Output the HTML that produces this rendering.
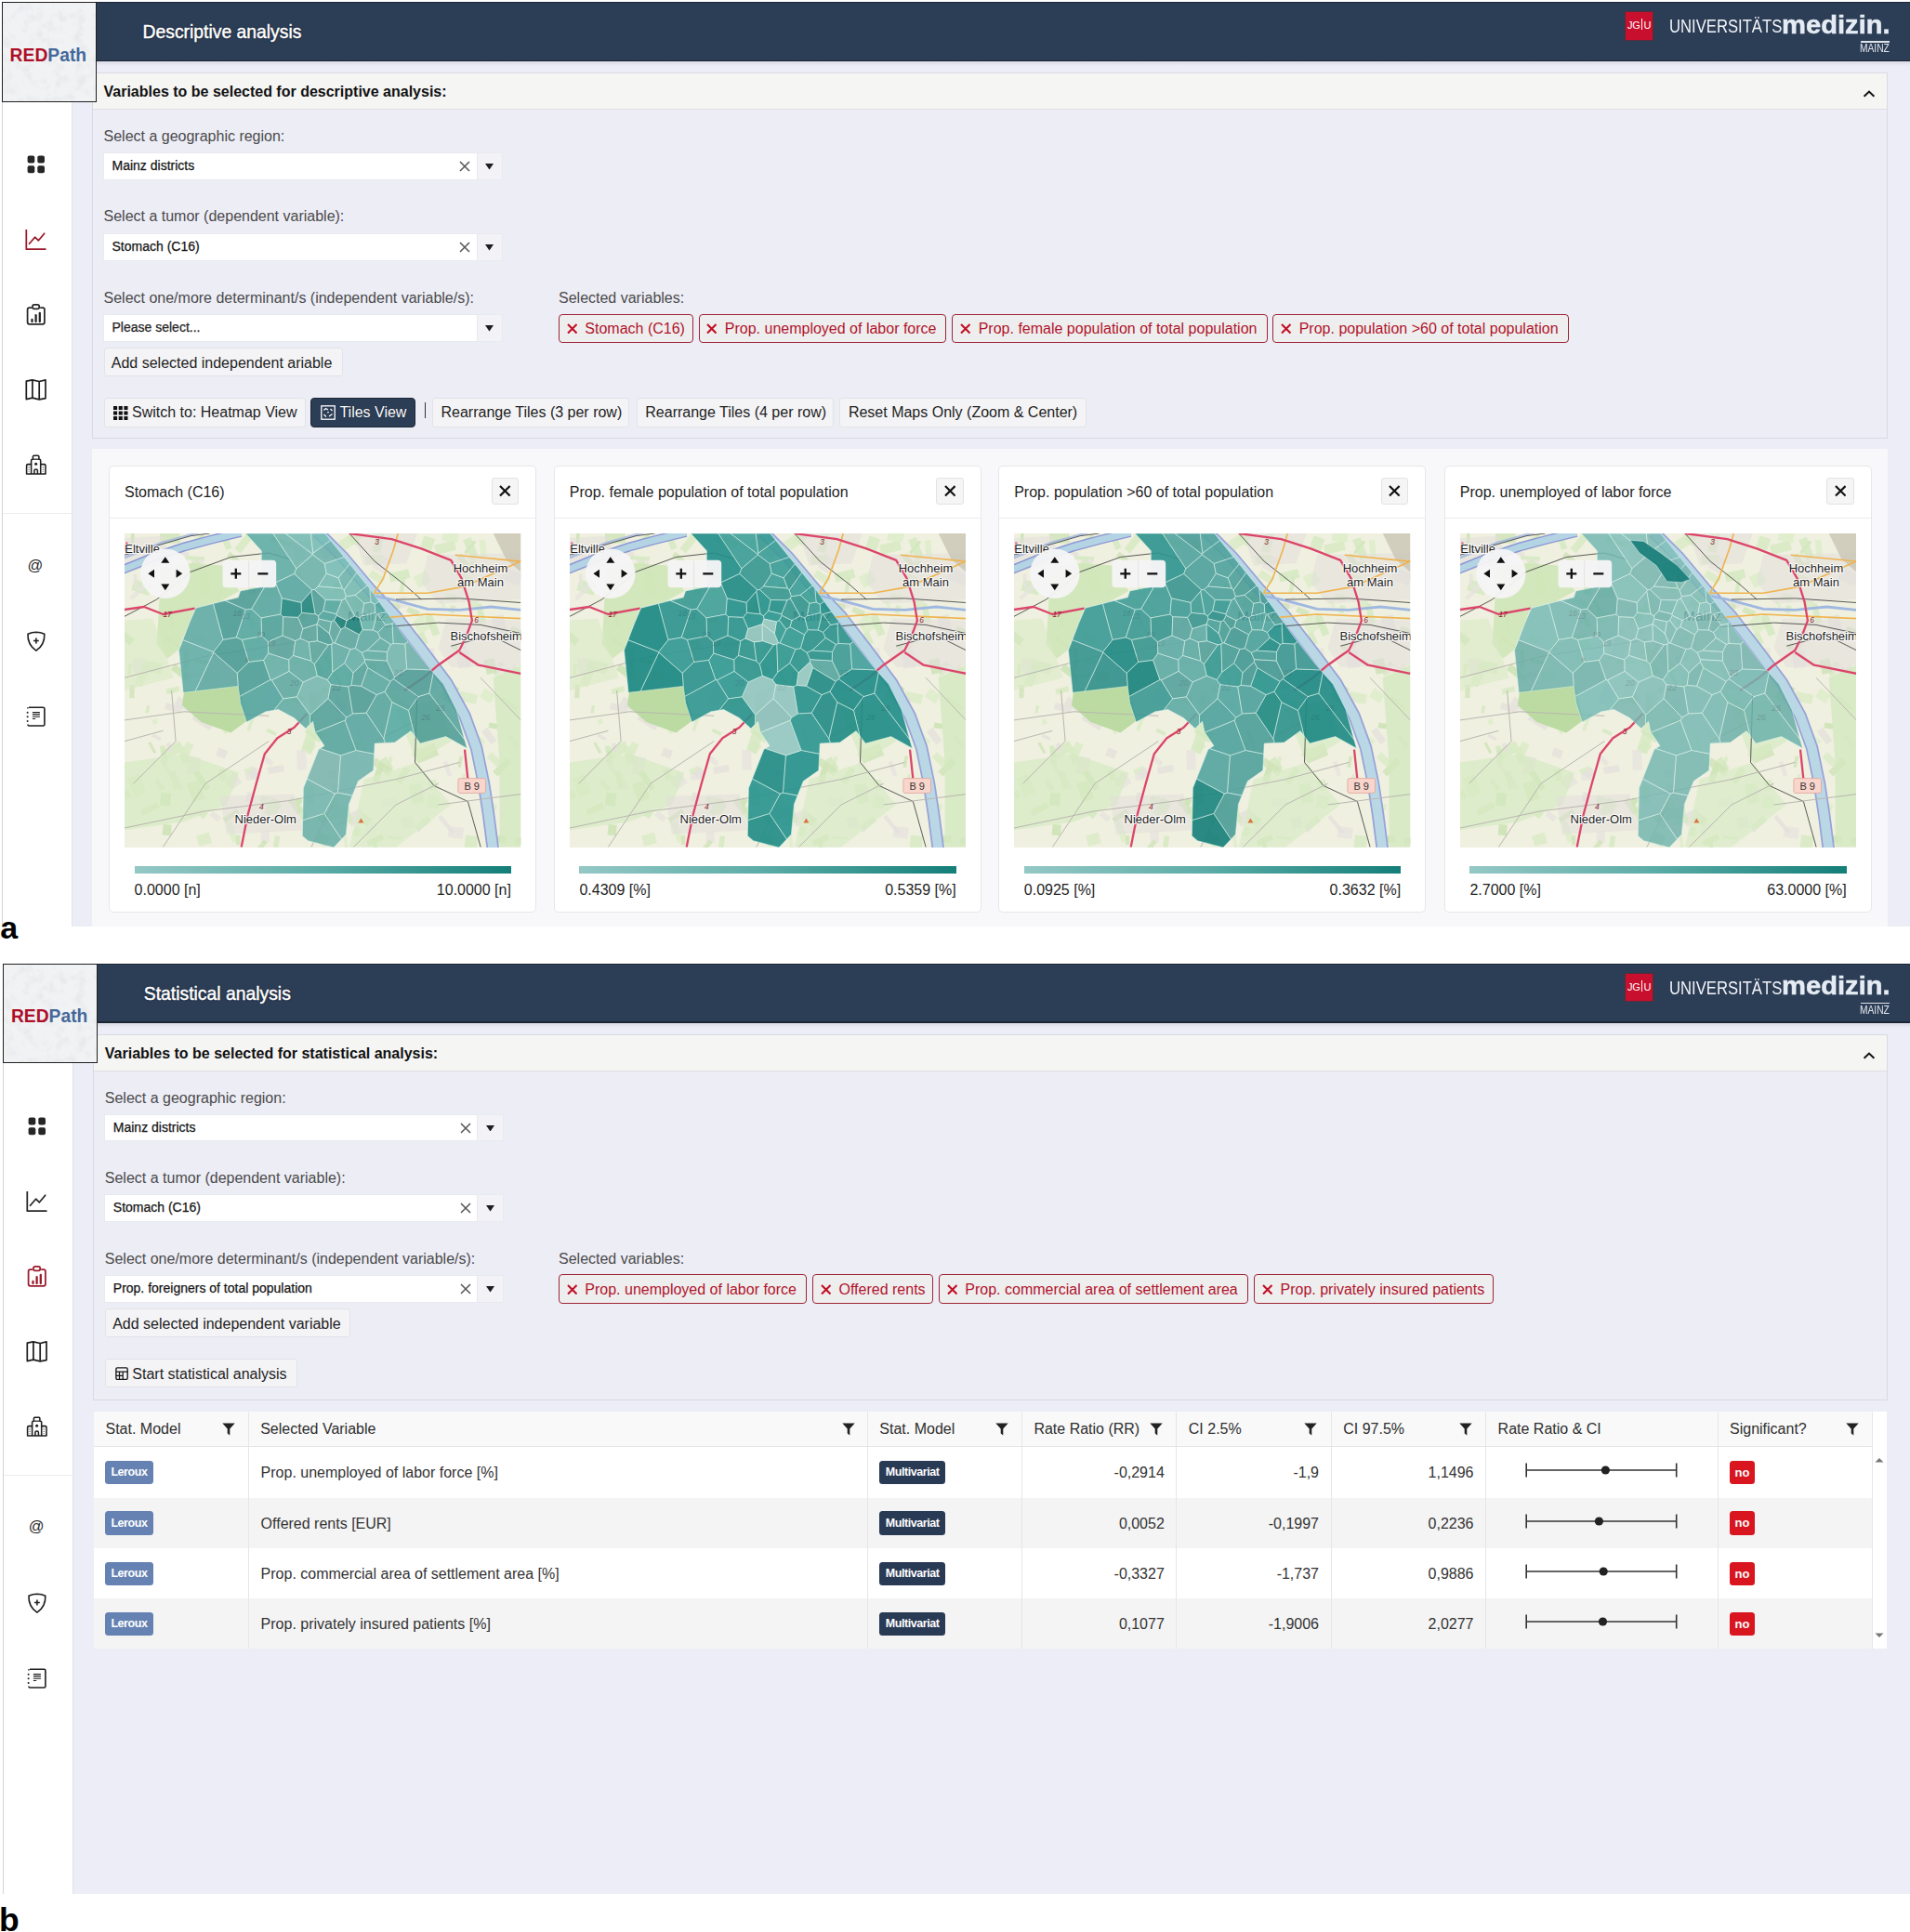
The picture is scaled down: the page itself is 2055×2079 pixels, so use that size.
<!DOCTYPE html><html><head><meta charset="utf-8"><style>html,body{margin:0;padding:0}body{width:2055px;height:2079px;position:relative;overflow:hidden;background:#fff;font-family:"Liberation Sans",sans-serif}</style></head><body><svg width="0" height="0" style="position:absolute"><symbol id="basemap" viewBox="0 0 426.5 338"><rect width="426.5" height="338" fill="#eff0df"/><rect x="95.4" y="179.1" width="12.0" height="9.6" fill="#d3e8bf" transform="rotate(113 101.4 183.9)" opacity="0.8"/><rect x="251.0" y="302.7" width="13.9" height="9.1" fill="#c9e2b2" transform="rotate(35 258.0 307.2)" opacity="0.8"/><rect x="224.2" y="179.5" width="12.5" height="12.5" fill="#e3e1dc" transform="rotate(42 230.5 185.8)" opacity="0.8"/><rect x="360.2" y="171.6" width="19.1" height="10.4" fill="#d9ebc6" transform="rotate(12 369.8 176.8)" opacity="0.8"/><rect x="117.6" y="6.4" width="21.4" height="8.2" fill="#d6eac2" transform="rotate(129 128.3 10.5)" opacity="0.8"/><rect x="298.0" y="305.4" width="12.5" height="11.8" fill="#e3e1dc" transform="rotate(80 304.2 311.3)" opacity="0.8"/><rect x="370.6" y="30.2" width="7.6" height="5.4" fill="#d6eac2" transform="rotate(174 374.4 32.9)" opacity="0.8"/><rect x="325.3" y="283.0" width="13.0" height="12.2" fill="#d6eac2" transform="rotate(103 331.8 289.1)" opacity="0.8"/><rect x="239.9" y="299.0" width="18.0" height="13.2" fill="#e3e1dc" transform="rotate(154 248.9 305.6)" opacity="0.8"/><rect x="290.0" y="105.7" width="15.3" height="9.3" fill="#e6e4df" transform="rotate(19 297.6 110.3)" opacity="0.8"/><rect x="264.6" y="331.8" width="10.1" height="4.4" fill="#c9e2b2" transform="rotate(87 269.6 334.0)" opacity="0.8"/><rect x="31.3" y="268.3" width="12.8" height="4.7" fill="#d6eac2" transform="rotate(53 37.7 270.6)" opacity="0.8"/><rect x="363.5" y="13.2" width="16.7" height="3.5" fill="#cfe4b8" transform="rotate(129 371.8 14.9)" opacity="0.8"/><rect x="229.5" y="308.8" width="10.3" height="5.6" fill="#d9ebc6" transform="rotate(6 234.7 311.6)" opacity="0.8"/><rect x="30.0" y="200.1" width="5.6" height="5.2" fill="#dcedc9" transform="rotate(73 32.8 202.7)" opacity="0.8"/><rect x="55.8" y="11.1" width="21.5" height="6.5" fill="#d6eac2" transform="rotate(173 66.5 14.3)" opacity="0.8"/><rect x="154.3" y="287.8" width="12.3" height="12.5" fill="#d3e8bf" transform="rotate(123 160.5 294.0)" opacity="0.8"/><rect x="256.9" y="314.1" width="14.6" height="7.7" fill="#e6e4df" transform="rotate(130 264.2 317.9)" opacity="0.8"/><rect x="394.0" y="144.7" width="9.9" height="6.3" fill="#d6eac2" transform="rotate(61 398.9 147.9)" opacity="0.8"/><rect x="414.6" y="101.7" width="12.2" height="9.5" fill="#cfe4b8" transform="rotate(24 420.7 106.4)" opacity="0.8"/><rect x="192.8" y="224.2" width="11.7" height="10.8" fill="#d9ebc6" transform="rotate(133 198.6 229.6)" opacity="0.8"/><rect x="248.4" y="319.2" width="5.4" height="7.1" fill="#dcedc9" transform="rotate(113 251.1 322.7)" opacity="0.8"/><rect x="246.5" y="104.9" width="11.9" height="6.4" fill="#dcedc9" transform="rotate(66 252.5 108.2)" opacity="0.8"/><rect x="118.1" y="125.8" width="19.7" height="3.3" fill="#e3e1dc" transform="rotate(102 128.0 127.5)" opacity="0.8"/><rect x="121.9" y="72.4" width="20.3" height="5.6" fill="#d6eac2" transform="rotate(34 132.1 75.2)" opacity="0.8"/><rect x="268.5" y="26.1" width="16.4" height="13.4" fill="#e6e4df" transform="rotate(121 276.7 32.8)" opacity="0.8"/><rect x="182.7" y="285.8" width="8.2" height="6.7" fill="#c9e2b2" transform="rotate(117 186.8 289.2)" opacity="0.8"/><rect x="112.5" y="259.2" width="5.6" height="13.5" fill="#e3e1dc" transform="rotate(57 115.3 266.0)" opacity="0.8"/><rect x="357.6" y="113.0" width="20.7" height="3.9" fill="#e3e1dc" transform="rotate(111 367.9 115.0)" opacity="0.8"/><rect x="168.9" y="171.2" width="21.1" height="8.1" fill="#dcedc9" transform="rotate(114 179.5 175.2)" opacity="0.8"/><rect x="167.6" y="136.1" width="22.5" height="4.7" fill="#d6eac2" transform="rotate(1 178.8 138.4)" opacity="0.8"/><rect x="228.8" y="331.5" width="18.6" height="3.4" fill="#dcedc9" transform="rotate(82 238.1 333.2)" opacity="0.8"/><rect x="221.0" y="294.5" width="21.4" height="12.4" fill="#d3e8bf" transform="rotate(175 231.7 300.7)" opacity="0.8"/><rect x="334.1" y="9.9" width="22.2" height="10.6" fill="#d6eac2" transform="rotate(166 345.1 15.2)" opacity="0.8"/><rect x="236.2" y="2.0" width="19.2" height="4.9" fill="#d9ebc6" transform="rotate(54 245.8 4.4)" opacity="0.8"/><rect x="212.2" y="135.0" width="22.8" height="9.7" fill="#dcedc9" transform="rotate(61 223.6 139.8)" opacity="0.8"/><rect x="403.9" y="181.0" width="20.4" height="3.7" fill="#d3e8bf" transform="rotate(40 414.1 182.9)" opacity="0.8"/><rect x="223.6" y="270.2" width="8.3" height="11.7" fill="#e3e1dc" transform="rotate(166 227.8 276.1)" opacity="0.8"/><rect x="342.3" y="-3.7" width="16.9" height="12.5" fill="#dcedc9" transform="rotate(9 350.8 2.5)" opacity="0.8"/><rect x="98.3" y="207.1" width="14.9" height="3.6" fill="#d9ebc6" transform="rotate(58 105.8 208.9)" opacity="0.8"/><rect x="362.2" y="260.3" width="5.9" height="3.5" fill="#d9ebc6" transform="rotate(87 365.1 262.0)" opacity="0.8"/><rect x="356.7" y="25.9" width="14.5" height="6.5" fill="#cfe4b8" transform="rotate(57 364.0 29.1)" opacity="0.8"/><rect x="159.0" y="128.7" width="10.8" height="5.9" fill="#d6eac2" transform="rotate(178 164.3 131.7)" opacity="0.8"/><rect x="43.4" y="184.2" width="18.6" height="7.2" fill="#e3e1dc" transform="rotate(14 52.7 187.8)" opacity="0.8"/><rect x="9.6" y="151.3" width="17.4" height="9.0" fill="#d9ebc6" transform="rotate(115 18.3 155.8)" opacity="0.8"/><rect x="259.3" y="141.6" width="12.1" height="8.5" fill="#d6eac2" transform="rotate(127 265.4 145.9)" opacity="0.8"/><rect x="402.2" y="138.7" width="5.3" height="5.4" fill="#d3e8bf" transform="rotate(49 404.8 141.4)" opacity="0.8"/><rect x="338.4" y="74.2" width="7.5" height="3.3" fill="#dcedc9" transform="rotate(59 342.1 75.9)" opacity="0.8"/><rect x="40.3" y="227.9" width="22.8" height="11.0" fill="#d6eac2" transform="rotate(153 51.7 233.4)" opacity="0.8"/><rect x="276.5" y="245.9" width="15.7" height="4.1" fill="#d9ebc6" transform="rotate(106 284.4 248.0)" opacity="0.8"/><rect x="195.5" y="75.4" width="12.4" height="8.8" fill="#d6eac2" transform="rotate(102 201.7 79.8)" opacity="0.8"/><rect x="65.8" y="5.8" width="21.0" height="4.3" fill="#c9e2b2" transform="rotate(152 76.3 7.9)" opacity="0.8"/><rect x="348.2" y="316.0" width="16.0" height="11.8" fill="#e6e4df" transform="rotate(7 356.2 321.9)" opacity="0.8"/><rect x="34.1" y="251.3" width="22.8" height="3.7" fill="#e3e1dc" transform="rotate(58 45.5 253.2)" opacity="0.8"/><rect x="348.5" y="79.0" width="8.4" height="5.7" fill="#d6eac2" transform="rotate(111 352.8 81.8)" opacity="0.8"/><rect x="96.3" y="198.1" width="22.8" height="9.1" fill="#d6eac2" transform="rotate(174 107.7 202.6)" opacity="0.8"/><rect x="206.7" y="323.3" width="12.8" height="11.2" fill="#c9e2b2" transform="rotate(29 213.1 328.9)" opacity="0.8"/><rect x="55.6" y="133.2" width="21.9" height="4.8" fill="#c9e2b2" transform="rotate(90 66.5 135.6)" opacity="0.8"/><rect x="383.8" y="169.4" width="13.4" height="10.9" fill="#dcedc9" transform="rotate(33 390.5 174.8)" opacity="0.8"/><rect x="313.0" y="42.9" width="14.8" height="13.3" fill="#dcedc9" transform="rotate(153 320.4 49.5)" opacity="0.8"/><rect x="277.9" y="284.4" width="16.3" height="9.4" fill="#e6e4df" transform="rotate(177 286.0 289.1)" opacity="0.8"/><rect x="120.7" y="88.0" width="20.3" height="5.2" fill="#e6e4df" transform="rotate(103 130.9 90.6)" opacity="0.8"/><rect x="133.3" y="254.7" width="7.7" height="13.9" fill="#e6e4df" transform="rotate(86 137.2 261.7)" opacity="0.8"/><rect x="189.1" y="277.5" width="20.6" height="9.1" fill="#d3e8bf" transform="rotate(87 199.4 282.1)" opacity="0.8"/><rect x="355.5" y="128.5" width="18.9" height="13.6" fill="#e6e4df" transform="rotate(84 364.9 135.3)" opacity="0.8"/><rect x="369.7" y="217.2" width="19.8" height="3.8" fill="#dcedc9" transform="rotate(39 379.6 219.1)" opacity="0.8"/><rect x="98.2" y="61.6" width="9.9" height="5.1" fill="#d9ebc6" transform="rotate(127 103.1 64.1)" opacity="0.8"/><rect x="372.6" y="83.0" width="21.4" height="6.4" fill="#d3e8bf" transform="rotate(76 383.3 86.2)" opacity="0.8"/><rect x="39.1" y="87.6" width="22.4" height="3.4" fill="#cfe4b8" transform="rotate(81 50.3 89.3)" opacity="0.8"/><rect x="-3.7" y="109.0" width="13.3" height="8.3" fill="#c9e2b2" transform="rotate(38 2.9 113.2)" opacity="0.8"/><rect x="162.9" y="181.0" width="7.3" height="6.0" fill="#d3e8bf" transform="rotate(120 166.5 184.0)" opacity="0.8"/><rect x="181.9" y="173.9" width="9.8" height="8.8" fill="#cfe4b8" transform="rotate(126 186.8 178.3)" opacity="0.8"/><rect x="313.7" y="94.8" width="17.8" height="10.2" fill="#dcedc9" transform="rotate(145 322.6 99.9)" opacity="0.8"/><rect x="39.9" y="314.6" width="11.4" height="9.2" fill="#c9e2b2" transform="rotate(95 45.7 319.2)" opacity="0.8"/><rect x="211.4" y="14.6" width="10.6" height="11.0" fill="#e3e1dc" transform="rotate(134 216.7 20.1)" opacity="0.8"/><rect x="67.6" y="298.6" width="17.5" height="4.4" fill="#e3e1dc" transform="rotate(168 76.3 300.8)" opacity="0.8"/><rect x="383.6" y="214.2" width="17.3" height="7.6" fill="#e3e1dc" transform="rotate(54 392.3 218.0)" opacity="0.8"/><rect x="190.8" y="103.7" width="8.4" height="3.8" fill="#d6eac2" transform="rotate(129 195.0 105.6)" opacity="0.8"/><rect x="146.9" y="83.6" width="12.3" height="12.6" fill="#dcedc9" transform="rotate(8 153.0 89.9)" opacity="0.8"/><rect x="99.4" y="256.6" width="11.7" height="6.7" fill="#d3e8bf" transform="rotate(73 105.3 259.9)" opacity="0.8"/><rect x="146.8" y="283.3" width="7.1" height="6.0" fill="#d3e8bf" transform="rotate(18 150.3 286.2)" opacity="0.8"/><rect x="236.9" y="302.2" width="7.1" height="10.7" fill="#d6eac2" transform="rotate(102 240.4 307.6)" opacity="0.8"/><rect x="339.4" y="250.8" width="16.2" height="4.6" fill="#e6e4df" transform="rotate(72 347.5 253.1)" opacity="0.8"/><rect x="227.9" y="51.3" width="8.4" height="12.6" fill="#dcedc9" transform="rotate(67 232.1 57.6)" opacity="0.8"/><rect x="1.9" y="264.7" width="21.9" height="13.4" fill="#dcedc9" transform="rotate(69 12.8 271.5)" opacity="0.8"/><rect x="260.9" y="327.1" width="18.0" height="6.3" fill="#c9e2b2" transform="rotate(155 269.9 330.2)" opacity="0.8"/><rect x="4.3" y="62.3" width="17.0" height="4.2" fill="#e6e4df" transform="rotate(136 12.9 64.4)" opacity="0.8"/><rect x="202.7" y="174.4" width="13.8" height="5.1" fill="#d9ebc6" transform="rotate(95 209.5 177.0)" opacity="0.8"/><rect x="334.7" y="310.9" width="23.0" height="4.2" fill="#e3e1dc" transform="rotate(51 346.2 313.0)" opacity="0.8"/><rect x="49.3" y="266.0" width="16.8" height="3.6" fill="#e6e4df" transform="rotate(65 57.8 267.8)" opacity="0.8"/><rect x="212.9" y="165.2" width="5.4" height="6.7" fill="#cfe4b8" transform="rotate(59 215.5 168.5)" opacity="0.8"/><rect x="285.3" y="40.6" width="21.3" height="9.6" fill="#d3e8bf" transform="rotate(167 295.9 45.4)" opacity="0.8"/><rect x="305.0" y="109.5" width="20.3" height="13.2" fill="#d6eac2" transform="rotate(155 315.1 116.1)" opacity="0.8"/><rect x="292.3" y="68.8" width="11.0" height="11.7" fill="#e6e4df" transform="rotate(74 297.8 74.7)" opacity="0.8"/><rect x="293.7" y="130.5" width="14.0" height="3.7" fill="#e6e4df" transform="rotate(153 300.7 132.3)" opacity="0.8"/><rect x="269.7" y="97.3" width="13.8" height="11.3" fill="#e3e1dc" transform="rotate(72 276.6 103.0)" opacity="0.8"/><rect x="189.1" y="6.4" width="9.9" height="12.3" fill="#cfe4b8" transform="rotate(81 194.0 12.6)" opacity="0.8"/><rect x="251.6" y="73.0" width="5.1" height="5.3" fill="#e3e1dc" transform="rotate(141 254.1 75.7)" opacity="0.8"/><rect x="360.4" y="178.8" width="8.0" height="3.2" fill="#e3e1dc" transform="rotate(105 364.4 180.4)" opacity="0.8"/><rect x="263.0" y="43.1" width="16.6" height="7.9" fill="#d9ebc6" transform="rotate(33 271.2 47.1)" opacity="0.8"/><rect x="168.9" y="102.0" width="5.6" height="10.9" fill="#d9ebc6" transform="rotate(43 171.7 107.4)" opacity="0.8"/><rect x="157.3" y="6.3" width="23.3" height="5.4" fill="#c9e2b2" transform="rotate(17 169.0 9.0)" opacity="0.8"/><rect x="77.6" y="106.0" width="7.2" height="13.0" fill="#dcedc9" transform="rotate(107 81.2 112.5)" opacity="0.8"/><rect x="110.3" y="259.7" width="13.8" height="13.3" fill="#e6e4df" transform="rotate(54 117.2 266.3)" opacity="0.8"/><rect x="233.3" y="3.2" width="11.4" height="13.9" fill="#d9ebc6" transform="rotate(57 239.0 10.2)" opacity="0.8"/><rect x="282.6" y="326.1" width="16.3" height="3.0" fill="#d3e8bf" transform="rotate(5 290.7 327.6)" opacity="0.8"/><rect x="1.0" y="167.5" width="14.2" height="5.1" fill="#cfe4b8" transform="rotate(92 8.1 170.0)" opacity="0.8"/><rect x="78.5" y="323.2" width="14.1" height="11.8" fill="#d9ebc6" transform="rotate(165 85.5 329.2)" opacity="0.8"/><rect x="154.4" y="250.4" width="17.0" height="7.3" fill="#e3e1dc" transform="rotate(171 162.9 254.0)" opacity="0.8"/><rect x="355.9" y="35.4" width="12.4" height="6.7" fill="#d6eac2" transform="rotate(122 362.1 38.8)" opacity="0.8"/><rect x="64.9" y="244.0" width="18.9" height="12.2" fill="#e3e1dc" transform="rotate(100 74.4 250.1)" opacity="0.8"/><rect x="149.9" y="134.4" width="9.4" height="11.6" fill="#dcedc9" transform="rotate(87 154.6 140.2)" opacity="0.8"/><rect x="340.1" y="164.9" width="19.3" height="13.1" fill="#c9e2b2" transform="rotate(125 349.7 171.4)" opacity="0.8"/><rect x="8.6" y="52.0" width="19.3" height="12.1" fill="#d3e8bf" transform="rotate(17 18.2 58.0)" opacity="0.8"/><rect x="126.2" y="201.2" width="20.2" height="3.6" fill="#d9ebc6" transform="rotate(110 136.4 203.0)" opacity="0.8"/><rect x="182.2" y="299.8" width="18.9" height="6.7" fill="#d3e8bf" transform="rotate(67 191.7 303.2)" opacity="0.8"/><rect x="71.8" y="262.6" width="22.4" height="6.7" fill="#c9e2b2" transform="rotate(56 83.0 266.0)" opacity="0.8"/><rect x="29.7" y="217.6" width="9.6" height="3.5" fill="#e3e1dc" transform="rotate(27 34.5 219.4)" opacity="0.8"/><rect x="244.8" y="-2.9" width="9.4" height="13.6" fill="#d6eac2" transform="rotate(40 249.4 3.9)" opacity="0.8"/><rect x="209.6" y="300.3" width="11.1" height="12.7" fill="#c9e2b2" transform="rotate(141 215.1 306.6)" opacity="0.8"/><rect x="65.3" y="24.6" width="20.7" height="4.2" fill="#d3e8bf" transform="rotate(4 75.7 26.7)" opacity="0.8"/><rect x="81.6" y="297.9" width="6.6" height="8.1" fill="#d3e8bf" transform="rotate(40 84.9 301.9)" opacity="0.8"/><rect x="262.6" y="254.0" width="21.6" height="6.8" fill="#c9e2b2" transform="rotate(109 273.4 257.4)" opacity="0.8"/><rect x="319.9" y="94.7" width="23.0" height="7.9" fill="#d3e8bf" transform="rotate(68 331.3 98.7)" opacity="0.8"/><rect x="220.3" y="155.0" width="18.8" height="3.8" fill="#c9e2b2" transform="rotate(62 229.7 156.9)" opacity="0.8"/><rect x="312.0" y="308.8" width="18.0" height="7.0" fill="#d3e8bf" transform="rotate(141 321.0 312.3)" opacity="0.8"/><rect x="252.3" y="65.4" width="11.7" height="14.0" fill="#d6eac2" transform="rotate(60 258.1 72.4)" opacity="0.8"/><rect x="181.4" y="79.2" width="11.1" height="11.2" fill="#e6e4df" transform="rotate(37 187.0 84.8)" opacity="0.8"/><rect x="364.3" y="326.8" width="16.6" height="13.2" fill="#d6eac2" transform="rotate(96 372.6 333.5)" opacity="0.8"/><rect x="148.2" y="60.9" width="16.9" height="7.5" fill="#d6eac2" transform="rotate(161 156.7 64.6)" opacity="0.8"/><rect x="197.1" y="191.8" width="5.7" height="13.5" fill="#d3e8bf" transform="rotate(3 200.0 198.6)" opacity="0.8"/><rect x="4.8" y="49.1" width="14.6" height="3.7" fill="#e6e4df" transform="rotate(85 12.0 50.9)" opacity="0.8"/><rect x="310.8" y="89.9" width="13.2" height="6.8" fill="#dcedc9" transform="rotate(134 317.4 93.3)" opacity="0.8"/><rect x="49.8" y="146.2" width="22.3" height="7.9" fill="#c9e2b2" transform="rotate(37 60.9 150.1)" opacity="0.8"/><rect x="313.1" y="229.9" width="23.6" height="13.8" fill="#cfe4b8" transform="rotate(158 324.9 236.7)" opacity="0.8"/><rect x="390.2" y="141.7" width="22.9" height="8.2" fill="#e6e4df" transform="rotate(180 401.6 145.8)" opacity="0.8"/><rect x="148.0" y="284.2" width="10.4" height="8.1" fill="#dcedc9" transform="rotate(160 153.2 288.2)" opacity="0.8"/><rect x="311.0" y="312.8" width="14.9" height="3.2" fill="#e3e1dc" transform="rotate(113 318.4 314.4)" opacity="0.8"/><rect x="225.3" y="53.4" width="6.0" height="5.2" fill="#c9e2b2" transform="rotate(139 228.3 56.0)" opacity="0.8"/><rect x="145.2" y="321.8" width="11.9" height="9.1" fill="#e6e4df" transform="rotate(88 151.2 326.4)" opacity="0.8"/><rect x="-0.1" y="144.4" width="11.4" height="3.6" fill="#d3e8bf" transform="rotate(98 5.6 146.1)" opacity="0.8"/><rect x="182.8" y="84.2" width="17.8" height="8.5" fill="#cfe4b8" transform="rotate(130 191.7 88.5)" opacity="0.8"/><rect x="10.3" y="140.0" width="16.9" height="10.4" fill="#e6e4df" transform="rotate(164 18.7 145.2)" opacity="0.8"/><rect x="395.7" y="247.6" width="21.0" height="7.5" fill="#cfe4b8" transform="rotate(135 406.2 251.4)" opacity="0.8"/><rect x="231.0" y="92.9" width="8.2" height="3.2" fill="#c9e2b2" transform="rotate(116 235.1 94.5)" opacity="0.8"/><rect x="187.8" y="219.0" width="22.6" height="12.0" fill="#d6eac2" transform="rotate(108 199.1 224.9)" opacity="0.8"/><rect x="152.8" y="211.8" width="10.6" height="3.8" fill="#d3e8bf" transform="rotate(25 158.1 213.7)" opacity="0.8"/><rect x="167.0" y="113.0" width="13.6" height="11.8" fill="#e3e1dc" transform="rotate(81 173.9 118.9)" opacity="0.8"/><rect x="243.0" y="43.0" width="5.7" height="8.3" fill="#c9e2b2" transform="rotate(41 245.9 47.2)" opacity="0.8"/><rect x="394.0" y="202.4" width="5.6" height="9.3" fill="#c9e2b2" transform="rotate(99 396.7 207.0)" opacity="0.8"/><rect x="43.7" y="262.5" width="19.3" height="5.9" fill="#d3e8bf" transform="rotate(78 53.3 265.5)" opacity="0.8"/><rect x="147.2" y="167.2" width="22.0" height="13.6" fill="#e6e4df" transform="rotate(116 158.2 174.0)" opacity="0.8"/><rect x="123.9" y="110.2" width="17.4" height="13.4" fill="#d9ebc6" transform="rotate(71 132.6 116.9)" opacity="0.8"/><rect x="103.9" y="317.8" width="22.9" height="6.5" fill="#dcedc9" transform="rotate(71 115.4 321.1)" opacity="0.8"/><rect x="8.7" y="134.6" width="12.9" height="12.9" fill="#e6e4df" transform="rotate(89 15.1 141.1)" opacity="0.8"/><rect x="310.6" y="231.0" width="7.2" height="10.0" fill="#d9ebc6" transform="rotate(22 314.2 236.0)" opacity="0.8"/><rect x="392.3" y="325.5" width="18.1" height="7.7" fill="#c9e2b2" transform="rotate(177 401.3 329.3)" opacity="0.8"/><rect x="111.2" y="181.8" width="5.9" height="5.6" fill="#e3e1dc" transform="rotate(172 114.1 184.6)" opacity="0.8"/><rect x="54.8" y="234.4" width="18.1" height="8.1" fill="#d9ebc6" transform="rotate(72 63.8 238.5)" opacity="0.8"/><rect x="50.9" y="16.0" width="19.4" height="4.9" fill="#e3e1dc" transform="rotate(34 60.6 18.4)" opacity="0.8"/><rect x="361.0" y="12.1" width="23.3" height="8.9" fill="#d3e8bf" transform="rotate(69 372.7 16.5)" opacity="0.8"/><rect x="181.8" y="59.4" width="5.5" height="4.1" fill="#dcedc9" transform="rotate(21 184.6 61.4)" opacity="0.8"/><rect x="42.9" y="117.2" width="22.4" height="3.8" fill="#cfe4b8" transform="rotate(35 54.1 119.1)" opacity="0.8"/><rect x="419.8" y="327.8" width="9.7" height="6.9" fill="#c9e2b2" transform="rotate(171 424.7 331.2)" opacity="0.8"/><rect x="37.2" y="280.7" width="14.0" height="11.1" fill="#c9e2b2" transform="rotate(96 44.2 286.2)" opacity="0.8"/><rect x="234.7" y="152.9" width="15.2" height="7.9" fill="#d6eac2" transform="rotate(96 242.3 156.9)" opacity="0.8"/><rect x="74.0" y="194.7" width="22.7" height="12.3" fill="#e3e1dc" transform="rotate(32 85.4 200.9)" opacity="0.8"/><rect x="131.3" y="279.1" width="7.5" height="9.6" fill="#e3e1dc" transform="rotate(10 135.0 283.9)" opacity="0.8"/><rect x="38.0" y="-1.2" width="21.5" height="11.7" fill="#cfe4b8" transform="rotate(178 48.8 4.7)" opacity="0.8"/><rect x="220.4" y="254.4" width="6.8" height="8.9" fill="#e3e1dc" transform="rotate(79 223.7 258.9)" opacity="0.8"/><rect x="244.7" y="69.3" width="13.7" height="9.2" fill="#cfe4b8" transform="rotate(115 251.5 73.9)" opacity="0.8"/><rect x="289.9" y="257.2" width="18.7" height="6.8" fill="#cfe4b8" transform="rotate(124 299.3 260.6)" opacity="0.8"/><rect x="117.1" y="328.0" width="10.1" height="4.4" fill="#cfe4b8" transform="rotate(90 122.2 330.1)" opacity="0.8"/><rect x="303.9" y="81.1" width="13.3" height="5.9" fill="#cfe4b8" transform="rotate(23 310.5 84.0)" opacity="0.8"/><rect x="214.5" y="291.3" width="23.7" height="8.8" fill="#d9ebc6" transform="rotate(79 226.4 295.7)" opacity="0.8"/><rect x="19.0" y="138.0" width="21.1" height="11.6" fill="#d6eac2" transform="rotate(11 29.5 143.8)" opacity="0.8"/><rect x="157.6" y="329.0" width="12.0" height="5.4" fill="#d3e8bf" transform="rotate(99 163.6 331.7)" opacity="0.8"/><rect x="174.4" y="289.7" width="18.5" height="7.0" fill="#cfe4b8" transform="rotate(54 183.6 293.2)" opacity="0.8"/><rect x="161.3" y="119.6" width="17.4" height="12.6" fill="#e3e1dc" transform="rotate(105 170.0 125.9)" opacity="0.8"/><rect x="134.6" y="-1.5" width="6.2" height="3.0" fill="#e6e4df" transform="rotate(159 137.8 0.0)" opacity="0.8"/><rect x="133.8" y="91.2" width="5.6" height="8.9" fill="#c9e2b2" transform="rotate(166 136.6 95.6)" opacity="0.8"/><rect x="303.7" y="273.5" width="20.9" height="13.0" fill="#d3e8bf" transform="rotate(79 314.1 280.0)" opacity="0.8"/><rect x="212.4" y="311.3" width="9.3" height="4.5" fill="#e6e4df" transform="rotate(55 217.0 313.6)" opacity="0.8"/><rect x="39.1" y="54.8" width="21.8" height="7.7" fill="#d6eac2" transform="rotate(143 50.0 58.7)" opacity="0.8"/><rect x="-1.1" y="278.4" width="8.5" height="6.0" fill="#d6eac2" transform="rotate(70 3.2 281.4)" opacity="0.8"/><rect x="244.3" y="317.9" width="10.7" height="6.2" fill="#d3e8bf" transform="rotate(115 249.7 321.0)" opacity="0.8"/><rect x="17.8" y="293.2" width="19.2" height="6.5" fill="#cfe4b8" transform="rotate(153 27.4 296.5)" opacity="0.8"/><rect x="193.5" y="136.6" width="22.0" height="12.1" fill="#d6eac2" transform="rotate(60 204.5 142.7)" opacity="0.8"/><rect x="370.0" y="71.3" width="11.1" height="10.1" fill="#d9ebc6" transform="rotate(172 375.5 76.4)" opacity="0.8"/><rect x="261.8" y="4.6" width="22.8" height="8.8" fill="#d3e8bf" transform="rotate(103 273.2 9.0)" opacity="0.8"/><rect x="66.3" y="270.9" width="20.7" height="13.1" fill="#cfe4b8" transform="rotate(71 76.7 277.4)" opacity="0.8"/><rect x="410.8" y="221.0" width="15.0" height="5.2" fill="#e3e1dc" transform="rotate(54 418.4 223.6)" opacity="0.8"/><rect x="240.5" y="119.9" width="14.8" height="6.5" fill="#e6e4df" transform="rotate(155 247.9 123.2)" opacity="0.8"/><rect x="179.8" y="238.8" width="21.3" height="9.9" fill="#e6e4df" transform="rotate(89 190.4 243.8)" opacity="0.8"/><rect x="71.4" y="28.4" width="13.7" height="13.2" fill="#e6e4df" transform="rotate(90 78.3 35.0)" opacity="0.8"/><rect x="128.8" y="252.3" width="11.2" height="5.7" fill="#d9ebc6" transform="rotate(158 134.4 255.1)" opacity="0.8"/><rect x="96.2" y="121.0" width="9.2" height="6.1" fill="#d9ebc6" transform="rotate(62 100.9 124.0)" opacity="0.8"/><rect x="292.1" y="112.3" width="7.1" height="5.4" fill="#e3e1dc" transform="rotate(80 295.7 115.0)" opacity="0.8"/><rect x="100.0" y="231.3" width="9.1" height="10.4" fill="#e3e1dc" transform="rotate(110 104.6 236.5)" opacity="0.8"/><rect x="283.2" y="175.5" width="16.4" height="7.7" fill="#dcedc9" transform="rotate(32 291.4 179.4)" opacity="0.8"/><rect x="178.5" y="12.7" width="19.9" height="12.5" fill="#e3e1dc" transform="rotate(88 188.4 18.9)" opacity="0.8"/><rect x="105.4" y="301.0" width="18.0" height="5.4" fill="#c9e2b2" transform="rotate(147 114.4 303.8)" opacity="0.8"/><rect x="140.3" y="334.0" width="14.2" height="5.0" fill="#cfe4b8" transform="rotate(129 147.4 336.5)" opacity="0.8"/><rect x="362.7" y="45.3" width="11.1" height="6.8" fill="#dcedc9" transform="rotate(26 368.2 48.8)" opacity="0.8"/><rect x="192.8" y="178.3" width="21.4" height="7.9" fill="#cfe4b8" transform="rotate(89 203.5 182.3)" opacity="0.8"/><rect x="347.6" y="63.0" width="6.8" height="11.4" fill="#dcedc9" transform="rotate(99 351.0 68.7)" opacity="0.8"/><rect x="243.6" y="225.9" width="10.5" height="6.6" fill="#dcedc9" transform="rotate(74 248.8 229.2)" opacity="0.8"/><rect x="385.7" y="137.3" width="15.6" height="11.4" fill="#cfe4b8" transform="rotate(76 393.5 143.0)" opacity="0.8"/><rect x="232.5" y="79.8" width="18.3" height="9.2" fill="#d3e8bf" transform="rotate(69 241.6 84.4)" opacity="0.8"/><rect x="126.8" y="50.6" width="22.4" height="8.3" fill="#c9e2b2" transform="rotate(97 138.0 54.8)" opacity="0.8"/><rect x="75.6" y="135.9" width="16.0" height="4.2" fill="#c9e2b2" transform="rotate(10 83.6 138.0)" opacity="0.8"/><rect x="290.2" y="53.9" width="17.6" height="4.3" fill="#d3e8bf" transform="rotate(99 299.0 56.0)" opacity="0.8"/><rect x="385.9" y="289.9" width="14.8" height="7.4" fill="#dcedc9" transform="rotate(12 393.3 293.6)" opacity="0.8"/><rect x="286.5" y="75.2" width="10.0" height="5.3" fill="#cfe4b8" transform="rotate(20 291.5 77.9)" opacity="0.8"/><rect x="173.3" y="86.1" width="23.3" height="5.0" fill="#e6e4df" transform="rotate(103 184.9 88.6)" opacity="0.8"/><rect x="279.2" y="80.1" width="9.9" height="6.8" fill="#d3e8bf" transform="rotate(62 284.1 83.5)" opacity="0.8"/><rect x="32.4" y="235.1" width="19.3" height="5.5" fill="#d3e8bf" transform="rotate(82 42.0 237.8)" opacity="0.8"/><rect x="135.1" y="252.5" width="8.1" height="10.3" fill="#e3e1dc" transform="rotate(49 139.2 257.7)" opacity="0.8"/><rect x="149.1" y="289.9" width="19.2" height="8.5" fill="#d6eac2" transform="rotate(124 158.6 294.2)" opacity="0.8"/><rect x="411.3" y="142.3" width="10.6" height="6.0" fill="#e3e1dc" transform="rotate(162 416.6 145.3)" opacity="0.8"/><rect x="11.3" y="54.8" width="17.2" height="5.3" fill="#e6e4df" transform="rotate(136 19.8 57.4)" opacity="0.8"/><rect x="355.1" y="244.1" width="12.1" height="3.5" fill="#cfe4b8" transform="rotate(100 361.2 245.9)" opacity="0.8"/><rect x="74.5" y="48.0" width="23.6" height="11.1" fill="#dcedc9" transform="rotate(87 86.3 53.6)" opacity="0.8"/><rect x="54.8" y="179.1" width="17.7" height="9.6" fill="#e3e1dc" transform="rotate(29 63.7 183.9)" opacity="0.8"/><rect x="28.0" y="25.0" width="17.9" height="4.0" fill="#d6eac2" transform="rotate(126 37.0 27.0)" opacity="0.8"/><rect x="292.8" y="182.9" width="17.6" height="7.9" fill="#d9ebc6" transform="rotate(32 301.6 186.9)" opacity="0.8"/><rect x="23.4" y="229.1" width="12.9" height="3.1" fill="#cfe4b8" transform="rotate(61 29.8 230.7)" opacity="0.8"/><rect x="352.5" y="119.6" width="5.8" height="5.3" fill="#c9e2b2" transform="rotate(2 355.4 122.3)" opacity="0.8"/><rect x="390.1" y="239.9" width="16.9" height="7.9" fill="#d9ebc6" transform="rotate(43 398.5 243.8)" opacity="0.8"/><rect x="140.6" y="75.7" width="12.9" height="4.1" fill="#d3e8bf" transform="rotate(57 147.1 77.7)" opacity="0.8"/><rect x="227.1" y="200.3" width="10.5" height="3.3" fill="#cfe4b8" transform="rotate(5 232.4 201.9)" opacity="0.8"/><rect x="87.8" y="148.5" width="14.7" height="10.0" fill="#d6eac2" transform="rotate(177 95.1 153.5)" opacity="0.8"/><rect x="274.7" y="244.8" width="14.9" height="7.7" fill="#d3e8bf" transform="rotate(56 282.2 248.6)" opacity="0.8"/><rect x="68.2" y="149.7" width="15.1" height="6.1" fill="#e3e1dc" transform="rotate(169 75.7 152.8)" opacity="0.8"/><rect x="174.9" y="40.2" width="24.0" height="4.8" fill="#dcedc9" transform="rotate(66 186.9 42.6)" opacity="0.8"/><rect x="45.0" y="166.0" width="14.1" height="5.7" fill="#d6eac2" transform="rotate(166 52.0 168.8)" opacity="0.8"/><rect x="0.3" y="6.0" width="16.8" height="3.6" fill="#c9e2b2" transform="rotate(91 8.7 7.8)" opacity="0.8"/><rect x="376.9" y="13.0" width="17.8" height="6.4" fill="#dcedc9" transform="rotate(85 385.8 16.2)" opacity="0.8"/><rect x="326.3" y="266.4" width="10.9" height="9.2" fill="#d9ebc6" transform="rotate(73 331.7 271.0)" opacity="0.8"/><rect x="43.7" y="227.8" width="9.5" height="4.7" fill="#e3e1dc" transform="rotate(70 48.4 230.1)" opacity="0.8"/><rect x="259.7" y="23.6" width="17.8" height="8.6" fill="#d9ebc6" transform="rotate(173 268.6 27.9)" opacity="0.8"/><rect x="204.0" y="120.5" width="14.5" height="3.9" fill="#cfe4b8" transform="rotate(120 211.3 122.5)" opacity="0.8"/><rect x="231.9" y="127.3" width="13.8" height="9.6" fill="#dcedc9" transform="rotate(5 238.8 132.1)" opacity="0.8"/><rect x="195.0" y="209.1" width="19.9" height="11.2" fill="#d3e8bf" transform="rotate(37 205.0 214.7)" opacity="0.8"/><rect x="265.5" y="247.2" width="23.2" height="8.2" fill="#cfe4b8" transform="rotate(36 277.1 251.4)" opacity="0.8"/><rect x="243.6" y="222.4" width="24.0" height="3.5" fill="#d6eac2" transform="rotate(72 255.6 224.2)" opacity="0.8"/><rect x="73.2" y="28.9" width="8.4" height="8.5" fill="#d6eac2" transform="rotate(46 77.4 33.1)" opacity="0.8"/><rect x="234.0" y="113.3" width="13.2" height="3.4" fill="#d6eac2" transform="rotate(132 240.6 115.0)" opacity="0.8"/><rect x="149.8" y="242.5" width="10.2" height="5.4" fill="#e6e4df" transform="rotate(41 154.9 245.2)" opacity="0.8"/><rect x="319.7" y="4.3" width="12.9" height="12.3" fill="#d6eac2" transform="rotate(109 326.2 10.5)" opacity="0.8"/><rect x="196.5" y="124.0" width="14.6" height="7.8" fill="#d6eac2" transform="rotate(36 203.7 127.9)" opacity="0.8"/><rect x="20.8" y="187.6" width="8.1" height="3.2" fill="#d3e8bf" transform="rotate(102 24.8 189.2)" opacity="0.8"/><rect x="407.4" y="40.2" width="19.8" height="12.9" fill="#e6e4df" transform="rotate(22 417.3 46.6)" opacity="0.8"/><rect x="392.8" y="92.6" width="21.3" height="13.0" fill="#e3e1dc" transform="rotate(78 403.4 99.0)" opacity="0.8"/><rect x="58.7" y="229.1" width="16.9" height="8.5" fill="#d9ebc6" transform="rotate(113 67.2 233.4)" opacity="0.8"/><rect x="96.7" y="2.9" width="23.0" height="6.5" fill="#d3e8bf" transform="rotate(69 108.2 6.2)" opacity="0.8"/><rect x="109.2" y="26.1" width="21.9" height="5.7" fill="#cfe4b8" transform="rotate(40 120.1 29.0)" opacity="0.8"/><rect x="92.0" y="301.4" width="11.3" height="6.3" fill="#e6e4df" transform="rotate(39 97.7 304.6)" opacity="0.8"/><rect x="231.3" y="131.5" width="14.6" height="6.3" fill="#e3e1dc" transform="rotate(151 238.6 134.6)" opacity="0.8"/><rect x="317.6" y="274.2" width="6.3" height="5.8" fill="#e3e1dc" transform="rotate(37 320.8 277.1)" opacity="0.8"/><path d="M39.2 36.9 L71.1 32.3 L105.2 34.6 L123.4 61.9 L102.9 73.3 L75.6 80.2 L68.8 98.4 L57.4 125.7 L46.0 134.8 L34.6 118.9 L36.9 82.4 Z" fill="#cfe6b8" opacity="0.9"/><path d="M64.2 169.0 L123.4 163.3 L132.5 200.9 L114.3 214.5 L82.4 203.1 L61.9 184.9 Z" fill="#bcdba2"/><path d="M0.0 246.4 L64.2 237.3 L123.4 257.8 L109.8 292.0 L64.2 310.2 L0.0 319.3 Z" fill="#d6eac2" opacity="0.7"/><path d="M396.7 155.3 L426.3 141.7 L426.3 337.5 L403.6 337.5 L403.6 246.4 Z" fill="#d3e8bf" opacity="0.8"/><path d="M257.8 264.6 L314.7 246.4 L351.2 292.0 L292.0 337.5 L241.9 337.5 Z" fill="#d9ebc6" opacity="0.7"/><path d="M0.0 93.8 L30.1 91.6 L52.8 155.3 L0.0 169.0 Z" fill="#d8e9c4" opacity="0.6"/><path d="M292.0 189.5 L337.5 178.1 L351.2 223.6 L314.7 246.4 Z" fill="#d5e9c2" opacity="0.7"/><path d="M326.1 23.2 L426.3 21.0 L426.3 71.1 L337.5 75.6 L319.3 52.8 Z" fill="#e1dfdb" opacity="0.55"/><path d="M346.6 91.6 L426.3 93.8 L426.3 141.7 L351.2 143.9 L337.5 123.4 Z" fill="#e1dfdb" opacity="0.55"/><path d="M102.9 282.9 L182.6 280.6 L191.8 319.3 L109.8 323.8 Z" fill="#e1dfdb" opacity="0.55"/><path d="M0.0 5.0 L41.4 2.7 L50.6 32.3 L0.0 41.4 Z" fill="#e1dfdb" opacity="0.55"/><path d="M276.0 123.4 L333.0 123.4 L337.5 169.0 L287.4 169.0 Z" fill="#e1dfdb" opacity="0.55"/><path d="M246.4 0.0 L314.7 0.0 L303.3 32.3 L257.8 34.6 Z" fill="#e1dfdb" opacity="0.55"/><path d="M396.7 0.0 L426.3 0.0 L426.3 41.4 L410.4 27.8 Z" fill="#c9c5b5" opacity="0.8"/><path d="M207.7 -1.8 L235.0 25.5 L264.6 60.8 L292.0 89.3 L319.3 124.6 L346.6 161.0 L366.0 196.3 L378.5 230.5 L386.5 269.2 L391.7 303.3 L396.7 342.1" fill="none" stroke="#97a2d8" stroke-width="13.5"/><path d="M207.7 -1.8 L235.0 25.5 L264.6 60.8 L292.0 89.3 L319.3 124.6 L346.6 161.0 L366.0 196.3 L378.5 230.5 L386.5 269.2 L391.7 303.3 L396.7 342.1" fill="none" stroke="#bad7e5" stroke-width="10"/><path d="M-2 39 L30 26 L64 14.5 L92 7 L125 -1" fill="none" stroke="#8c98d6" stroke-width="10"/><path d="M-2 39 L30 26 L64 14.5 L92 7 L125 -1" fill="none" stroke="#b4d4e4" stroke-width="7"/><path d="M-2 27 L40 10 L80 -1" fill="none" stroke="#9fb4de" stroke-width="2.5" opacity="0.8"/><path d="M265.8 66.5 L292.0 72.2 L326.1 81.3 L360.3 82.4 L394.4 79.0 L426.3 82.4" fill="none" stroke="#9fb8e0" stroke-width="2.8"/><path d="M0.0 23.2 L71.1 2.7 L91.6 0.0" fill="none" stroke="#4a4a4a" stroke-width="0.9"/><path d="M0.0 89.3 L34.6 71.1 L71.1 41.4 L114.3 25.5 L155.3 21.0 L178.1 27.8" fill="none" stroke="#4a4a4a" stroke-width="0.9"/><path d="M241.9 0.0 L269.2 30.1 L301.1 55.1 L319.3 71.1" fill="none" stroke="#4a4a4a" stroke-width="0.9"/><path d="M292.0 71.1 L360.3 69.9 L426.3 74.5" fill="none" stroke="#4a4a4a" stroke-width="0.9"/><path d="M278.3 100.7 L337.5 96.1 L383.1 98.4 L426.3 107.5" fill="none" stroke="#4a4a4a" stroke-width="0.9"/><path d="M314.7 173.5 L312.5 246.4 L333.0 271.5 L369.4 288.5 L383.1 337.5" fill="none" stroke="#4a4a4a" stroke-width="0.9"/><path d="M351.2 121.2 L394.4 109.8 L426.3 125.7" fill="none" stroke="#4a4a4a" stroke-width="0.9"/><path d="M0.0 200.9 L64.2 191.8 L155.3 196.3" fill="none" stroke="#b9b6b0" stroke-width="1"/><path d="M41.4 337.5 L87.0 269.2 L155.3 223.6" fill="none" stroke="#b9b6b0" stroke-width="1"/><path d="M246.4 337.5 L292.0 292.0 L337.5 269.2" fill="none" stroke="#b9b6b0" stroke-width="1"/><path d="M200.9 337.5 L223.6 292.0" fill="none" stroke="#b9b6b0" stroke-width="1"/><path d="M9.6 269.2 L55.1 223.6 L50.6 169.0" fill="none" stroke="#b9b6b0" stroke-width="1"/><path d="M0.0 317.0 L87.0 298.8 L178.1 287.4 L292.0 264.6 L360.3 246.4" fill="none" stroke="#b9b6b0" stroke-width="1"/><path d="M0.0 155.3 L87.0 132.5 L200.9 114.3" fill="none" stroke="#b9b6b0" stroke-width="1"/><path d="M269.2 223.6 L314.7 200.9" fill="none" stroke="#b9b6b0" stroke-width="1"/><path d="M337.5 292.0 L426.3 280.6" fill="none" stroke="#b9b6b0" stroke-width="1"/><path d="M0.0 223.6 L41.4 212.3" fill="none" stroke="#b9b6b0" stroke-width="1"/><path d="M383.1 155.3 L426.3 200.9" fill="none" stroke="#b9b6b0" stroke-width="1"/><path d="M265.8 68.8 L278.3 48.3 L289.7 16.4 L294.2 0.0" fill="none" stroke="#f0b34e" stroke-width="1.6"/><path d="M269.2 64.2 L326.1 64.2 L364.8 57.4 L426.3 30.1" fill="none" stroke="#f0b34e" stroke-width="1.6"/><path d="M355.7 23.2 L426.3 30.1" fill="none" stroke="#f0b34e" stroke-width="1.6"/><path d="M266.9 91.6 L326.1 87.0 L426.3 91.6" fill="none" stroke="#f0b34e" stroke-width="1.6"/><path d="M241.9 0.0 L287.4 6.1 L319.3 16.4 L351.2 28.9 L362.6 48.3 L370.5 73.3 L373.9 93.8 L367.1 112.0 L360.3 125.7 L337.5 141.7 L321.6 155.3 L301.1 169.0" fill="none" stroke="#dc456a" stroke-width="2.3" stroke-linejoin="round"/><path d="M360.3 128.0 L380.8 141.7 L426.3 150.8" fill="none" stroke="#dc456a" stroke-width="2.3" stroke-linejoin="round"/><path d="M0.0 82.0 L21.0 79.0 L41.4 87.0 L75.6 80.6" fill="none" stroke="#dc456a" stroke-width="2.3" stroke-linejoin="round"/><path d="M125.7 337.5 L132.5 303.3 L141.7 269.2 L150.8 237.3 L164.4 220.2 L182.6 208.8 L196.3 194.0" fill="none" stroke="#dc456a" stroke-width="2.3" stroke-linejoin="round"/><path d="M366.0 232.7 L369.4 264.6" fill="none" stroke="#dc456a" stroke-width="2.3" stroke-linejoin="round"/><path d="M0.0 18.7 L2.7 9.6" fill="none" stroke="#dc456a" stroke-width="2.3" stroke-linejoin="round"/><path d="M129.5438396720565 137.32122523343202 L132.5438396720565 132.32122523343202 L135.5438396720565 137.32122523343202 Z" fill="#d9743a"/><path d="M251.3839672056479 311.5412206786609 L254.3839672056479 306.5412206786609 L257.3839672056479 311.5412206786609 Z" fill="#d9743a"/><text x="0.3" y="21.3" font-size="13" text-anchor="start" fill="#1d1d1d" stroke="#fff" stroke-width="2.2" stroke-opacity="0.85" paint-order="stroke" font-family="Liberation Sans, sans-serif">Eltville</text><text x="383.0" y="42.3" font-size="13" text-anchor="middle" fill="#1d1d1d" stroke="#fff" stroke-width="2.2" stroke-opacity="0.85" paint-order="stroke" font-family="Liberation Sans, sans-serif">Hochheim</text><text x="383.0" y="57.3" font-size="13" text-anchor="middle" fill="#1d1d1d" stroke="#fff" stroke-width="2.2" stroke-opacity="0.85" paint-order="stroke" font-family="Liberation Sans, sans-serif">am Main</text><text x="350.5" y="115.3" font-size="13" text-anchor="start" fill="#1d1d1d" stroke="#fff" stroke-width="2.2" stroke-opacity="0.85" paint-order="stroke" font-family="Liberation Sans, sans-serif">Bischofsheim</text><text x="118.5" y="312.0" font-size="13" text-anchor="start" fill="#1d1d1d" stroke="#fff" stroke-width="2.2" stroke-opacity="0.85" paint-order="stroke" font-family="Liberation Sans, sans-serif">Nieder-Olm</text><text x="240.0" y="94.0" font-size="15.5" text-anchor="start" fill="#1d1d1d" stroke="#fff" stroke-width="2.2" stroke-opacity="0.85" paint-order="stroke" font-family="Liberation Sans, sans-serif">Mainz</text><rect x="358.9" y="263.6" width="29.6" height="15.8" rx="2" fill="#f9d5cc" stroke="#e0a49a" stroke-width="0.8"/><text x="373.7" y="275.6" font-size="11" text-anchor="middle" fill="#333" font-family="Liberation Sans, sans-serif">B 9</text><text x="41.4" y="89.7" font-size="8.5" font-style="italic" fill="#8a2030" font-family="Liberation Sans, sans-serif">17</text><text x="141.7" y="112.0" font-size="8.5" font-style="italic" fill="#8a2030" font-family="Liberation Sans, sans-serif">19</text><text x="153.0" y="121.2" font-size="8.5" font-style="italic" fill="#8a2030" font-family="Liberation Sans, sans-serif">19</text><text x="178.1" y="164.4" font-size="8.5" font-style="italic" fill="#8a2030" font-family="Liberation Sans, sans-serif">20</text><text x="223.6" y="169.0" font-size="8.5" font-style="italic" fill="#8a2030" font-family="Liberation Sans, sans-serif">22</text><text x="289.7" y="153.0" font-size="8.5" font-style="italic" fill="#8a2030" font-family="Liberation Sans, sans-serif">23</text><text x="319.3" y="200.9" font-size="8.5" font-style="italic" fill="#8a2030" font-family="Liberation Sans, sans-serif">26</text><text x="335.2" y="190.6" font-size="8.5" font-style="italic" fill="#8a2030" font-family="Liberation Sans, sans-serif">26</text><text x="174.7" y="215.7" font-size="8.5" font-style="italic" fill="#8a2030" font-family="Liberation Sans, sans-serif">3</text><text x="145.1" y="296.5" font-size="8.5" font-style="italic" fill="#8a2030" font-family="Liberation Sans, sans-serif">4</text><text x="269.2" y="11.8" font-size="8.5" font-style="italic" fill="#8a2030" font-family="Liberation Sans, sans-serif">3</text><text x="376.2" y="96.1" font-size="8.5" font-style="italic" fill="#8a2030" font-family="Liberation Sans, sans-serif">6</text><text x="116.6" y="89.3" font-size="8.5" font-style="italic" fill="#8a2030" font-family="Liberation Sans, sans-serif">18</text><text x="125.7" y="91.6" font-size="8.5" font-style="italic" fill="#8a2030" font-family="Liberation Sans, sans-serif">13</text></symbol></svg><div style="position:absolute;left:78.0px;top:64.0px;width:1977.0px;height:933.0px;background:#ecedf6;"></div><div style="position:absolute;left:1.5px;top:108.0px;width:76.7px;height:889.0px;background:#fff;border-left:1px solid #d4d4d8;border-right:1px solid #e2e2ea;box-sizing:border-box;"></div><svg style="position:absolute;left:0.0px;top:0.0px;overflow:visible" width="60" height="800" viewBox="0 0 60 800" fill="none" stroke="#222" stroke-width="1.7" stroke-linejoin="round"><rect x="29.6" y="167.4" width="7.7" height="8" rx="2" fill="#262626" stroke="none"/><rect x="40.3" y="167.4" width="7.7" height="8" rx="2" fill="#262626" stroke="none"/><rect x="29.6" y="178.3" width="7.7" height="8" rx="2" fill="#262626" stroke="none"/><rect x="40.3" y="178.3" width="7.7" height="8" rx="2" fill="#262626" stroke="none"/></svg><svg style="position:absolute;left:0.0px;top:0.0px;overflow:visible" width="60" height="800" viewBox="0 0 60 800" fill="none" stroke="#9c1a2c" stroke-width="1.75" stroke-linejoin="round"><path d="M28.3 247 V268.2 H49.5"/><path d="M31.5 262.3 L37.6 255.2 L41.4 258.8 L47.7 251.3" stroke-linecap="round"/></svg><svg style="position:absolute;left:0.0px;top:0.0px;overflow:visible" width="60" height="800" viewBox="0 0 60 800" fill="none" stroke="#262626" stroke-width="1.75" stroke-linejoin="round"><path d="M34 331 H31.6 Q29.6 331 29.6 333 V346.8 Q29.6 348.8 31.6 348.8 H45.9 Q47.9 348.8 47.9 346.8 V333 Q47.9 331 45.9 331 H43.2"/><rect x="35" y="327.9" width="7.2" height="4.5" rx="1.8"/><path d="M34.5 343.9 V346 M38.6 339.2 V346 M42.8 336.8 V346" stroke-width="2.3" stroke-linecap="round"/></svg><svg style="position:absolute;left:0.0px;top:0.0px;overflow:visible" width="60" height="800" viewBox="0 0 60 800" fill="none" stroke="#1e1e1e" stroke-width="1.7" stroke-linejoin="round"><path d="M28.3 410.2 L34.8 408.9 L42.2 410.5 L49 408.9 V428.6 L42.2 429.9 L34.8 428.2 L28.3 429.6 Z"/><path d="M34.9 409.2 V428.2 M42.2 410.5 V429.9"/></svg><svg style="position:absolute;left:0.0px;top:0.0px;overflow:visible" width="60" height="800" viewBox="0 0 60 800" fill="none" stroke="#1e1e1e" stroke-width="1.55" stroke-linejoin="round"><path d="M28.6 510 V501 Q28.6 499.6 30 499.6 H33.6 V495.6 Q33.6 494.2 35 494.2 H35.4 V491.6 Q35.4 490.3 36.7 490.3 H40.6 Q41.9 490.3 41.9 491.6 V494.2 H42.3 Q43.7 494.2 43.7 495.6 V499.6 H47.6 Q49 499.6 49 501 V510 Z"/><path d="M33.6 499.6 V510 M43.7 499.6 V510 M36.9 510 V506.6 Q36.9 505 38.65 505 Q40.4 505 40.4 506.6 V510"/><path d="M35.4 494.2 H41.9" stroke-width="1.2"/><circle cx="38.65" cy="499.3" r="1.55" fill="#1e1e1e" stroke="none"/><path d="M31.1 502.6 V503.4 M31.1 505 V505.8 M31.1 507.4 V508 M46.3 502.6 V503.4 M46.3 505 V505.8 M46.3 507.4 V508" stroke-width="1.1"/></svg><div style="position:absolute;left:2.5px;top:552.0px;width:75.7px;height:1.0px;background:#ececf0;"></div><div style="position:absolute;left:29.4px;top:598.5px;font-size:16.5px;line-height:19px;color:#1e1e1e">@</div><svg style="position:absolute;left:0.0px;top:0.0px;overflow:visible" width="60" height="800" viewBox="0 0 60 800" fill="none" stroke="#1e1e1e" stroke-width="1.6" stroke-linejoin="round"><path d="M38.9 680.3 Q43.6 680.4 47.8 682.2 Q48.4 693.6 38.9 700.2 Q29.4 693.6 30 682.2 Q34.2 680.4 38.9 680.3 Z"/><path d="M38.9 686.6 V692.4 M36 689.5 H41.8" stroke-width="1.6"/></svg><svg style="position:absolute;left:0.0px;top:0.0px;overflow:visible" width="60" height="800" viewBox="0 0 60 800" fill="none" stroke="#1e1e1e" stroke-width="1.6" stroke-linejoin="round"><path d="M31 761.3 H46.4 Q47.9 761.3 47.9 762.8 V779.5 Q47.9 781 46.4 781 H31.3 Q29.9 781 29.9 779.5"/><path d="M29.9 761.3 V762.6"/><circle cx="29.6" cy="766.8" r="1" fill="#1e1e1e" stroke="none"/><circle cx="29.6" cy="771.3" r="1" fill="#1e1e1e" stroke="none"/><circle cx="29.6" cy="775.9" r="1" fill="#1e1e1e" stroke="none"/><path d="M34.9 766.6 H42.9 M34.9 768.9 H42.9 M34.9 771.2 H42.9 M34.9 773.5 H38.2" stroke-width="1.1"/></svg><div style="position:absolute;left:104.0px;top:2.0px;width:1951.0px;height:64.0px;background:#2c3d56;border-top:1.5px solid #1b2636;box-sizing:border-box;"></div><div style="position:absolute;left:104.0px;top:64.8px;width:1951.0px;height:1.5px;background:#1d2534;"></div><div style="position:absolute;left:104.0px;top:66.3px;width:1951.0px;height:4.7px;background:linear-gradient(#d9dae4,rgba(236,237,246,0));"></div><div style="position:absolute;left:153.5px;top:23.0px;font-size:19.35px;line-height:22px;color:#fff;font-weight:normal;white-space:nowrap;text-shadow:0 0 2px #0c1522,0 0 1px #0c1522;letter-spacing:0px;-webkit-text-stroke:0.45px #fff;">Descriptive analysis</div><div style="position:absolute;left:1748.7px;top:13.0px;width:29.7px;height:29.7px;background:#c8102e;box-shadow:0 0 0 1px #5a2a3a;"><div style="position:absolute;left:0;top:7px;width:100%;text-align:center;color:#fff;font-size:11px;line-height:14px;letter-spacing:-0.3px">JG<span style="display:inline-block;width:1px;height:12px;background:#fff;vertical-align:-1px;margin:0 1.5px"></span>U</div></div><div style="position:absolute;left:1795.6px;top:16.3px;font-size:20.5px;line-height:23px;color:#f2f4f8;white-space:nowrap;transform-origin:0 0;transform:scaleX(0.8125)">UNIVERSITÄTS</div><div style="position:absolute;left:1917px;top:11.8px;font-size:27px;line-height:31px;font-weight:bold;color:#e6ecf3;white-space:nowrap;transform-origin:0 0;transform:scaleX(1.08);-webkit-text-stroke:0.5px #e6ecf3">medizin.</div><div style="position:absolute;left:2001.5px;top:44.3px;width:31.8px;height:1.3px;background:#dfe3ea;"></div><div style="position:absolute;left:2001px;top:44.3px;font-size:12.8px;line-height:15px;color:#e4e8ee;white-space:nowrap;transform-origin:0 0;transform:scaleX(0.80)">MAINZ</div><div style="position:absolute;left:99.0px;top:78.0px;width:1932.0px;height:394.0px;background:#ededf6;border:1px solid #d9d9e2;box-sizing:border-box;"></div><div style="position:absolute;left:100.0px;top:79.0px;width:1930.0px;height:39.0px;background:#f5f5f4;border-bottom:1px solid #dedee2;box-sizing:border-box;"></div><div style="position:absolute;left:111.5px;top:90.1px;font-size:16px;line-height:17px;color:#111;font-weight:bold;white-space:nowrap;">Variables to be selected for descriptive analysis:</div><svg style="position:absolute;left:2003.5px;top:96.3px" width="14" height="10" viewBox="0 0 14 10"><path d="M1.6 7.8 L7 2.6 L12.4 7.8" fill="none" stroke="#111" stroke-width="2"/></svg><div style="position:absolute;left:2.0px;top:2.0px;width:102.0px;height:107.8px;box-sizing:border-box;border:1.6px solid #202020;background:#f1f2f4;overflow:hidden;"><svg width="100%" height="100%" style="position:absolute;left:0;top:0"><defs><filter id="nz2" x="0" y="0" width="100%" height="100%"><feTurbulence type="fractalNoise" baseFrequency="0.09" numOctaves="3" seed="4"/><feColorMatrix values="0 0 0 0 0.55  0 0 0 0 0.56  0 0 0 0 0.58  0 0 0 1.6 -0.75"/></filter></defs><rect width="100%" height="100%" filter="url(#nz2)" opacity="0.35"/></svg></div><div style="position:absolute;left:10.6px;top:48.6px;font-size:19.3px;line-height:21px;color:#333;font-weight:bold;white-space:nowrap;letter-spacing:0px;"><span style="color:#ad0f26">RED</span><span style="color:#44689a">Path</span></div><div style="position:absolute;left:111.5px;top:137.8px;font-size:16px;line-height:17px;color:#4b4b4b;font-weight:normal;white-space:nowrap;">Select a geographic region:</div><div style="position:absolute;left:111.7px;top:165.0px;width:428.3px;height:28.0px;background:#fff;box-shadow:0 0 0 0.6px #e6e6ec;"></div><div style="position:absolute;left:513.0px;top:165.0px;width:27.0px;height:28.0px;background:#f3f3f7;"></div><div style="position:absolute;left:512.5px;top:165.0px;width:1.0px;height:28.0px;background:#e8e8ee;"></div><div style="position:absolute;left:120.5px;top:170.2px;font-size:14px;line-height:16px;color:#141414;font-weight:normal;white-space:nowrap;-webkit-text-stroke:0.25px #141414;">Mainz districts</div><svg style="position:absolute;left:493.8px;top:173.3px" width="12" height="12" viewBox="-6.0 -6.0 12 12"><path d="M-5.0 -5.0 L5.0 5.0 M5.0 -5.0 L-5.0 5.0" stroke="#555" stroke-width="1.5" stroke-linecap="butt"/></svg><svg style="position:absolute;left:522.2px;top:176.2px" width="9" height="6.5" viewBox="0 0 9 6.5"><path d="M0 0 H9 L4.5 6.5 Z" fill="#1e1e1e"/></svg><div style="position:absolute;left:111.5px;top:224.0px;font-size:16px;line-height:17px;color:#4b4b4b;font-weight:normal;white-space:nowrap;">Select a tumor (dependent variable):</div><div style="position:absolute;left:111.7px;top:251.5px;width:428.3px;height:28.5px;background:#fff;box-shadow:0 0 0 0.6px #e6e6ec;"></div><div style="position:absolute;left:513.0px;top:251.5px;width:27.0px;height:28.5px;background:#f3f3f7;"></div><div style="position:absolute;left:512.5px;top:251.5px;width:1.0px;height:28.5px;background:#e8e8ee;"></div><div style="position:absolute;left:120.5px;top:256.9px;font-size:14px;line-height:16px;color:#141414;font-weight:normal;white-space:nowrap;-webkit-text-stroke:0.25px #141414;">Stomach (C16)</div><svg style="position:absolute;left:493.8px;top:260.1px" width="12" height="12" viewBox="-6.0 -6.0 12 12"><path d="M-5.0 -5.0 L5.0 5.0 M5.0 -5.0 L-5.0 5.0" stroke="#555" stroke-width="1.5" stroke-linecap="butt"/></svg><svg style="position:absolute;left:522.2px;top:263.0px" width="9" height="6.5" viewBox="0 0 9 6.5"><path d="M0 0 H9 L4.5 6.5 Z" fill="#1e1e1e"/></svg><div style="position:absolute;left:111.5px;top:312.0px;font-size:16px;line-height:17px;color:#4b4b4b;font-weight:normal;white-space:nowrap;">Select one/more determinant/s (independent variable/s):</div><div style="position:absolute;left:111.7px;top:339.4px;width:428.3px;height:27.2px;background:#fff;box-shadow:0 0 0 0.6px #e6e6ec;"></div><div style="position:absolute;left:513.0px;top:339.4px;width:27.0px;height:27.2px;background:#f3f3f7;"></div><div style="position:absolute;left:512.5px;top:339.4px;width:1.0px;height:27.2px;background:#e8e8ee;"></div><div style="position:absolute;left:120.5px;top:344.2px;font-size:14px;line-height:16px;color:#2a2a2a;font-weight:normal;white-space:nowrap;-webkit-text-stroke:0.25px #141414;">Please select...</div><svg style="position:absolute;left:522.2px;top:350.2px" width="9" height="6.5" viewBox="0 0 9 6.5"><path d="M0 0 H9 L4.5 6.5 Z" fill="#1e1e1e"/></svg><div style="position:absolute;left:111.6px;top:373.7px;width:257.4px;height:30.9px;background:#f4f4f6;border:1px solid #e2e2e8;border-radius:3px;box-sizing:border-box;"></div><div style="position:absolute;left:119.8px;top:381.6px;font-size:16px;line-height:17px;color:#1e1e1e;font-weight:normal;white-space:nowrap;">Add selected independent ariable</div><div style="position:absolute;left:601.0px;top:312.0px;font-size:16px;line-height:17px;color:#4b4b4b;font-weight:normal;white-space:nowrap;">Selected variables:</div><div style="position:absolute;left:601.0px;top:337.7px;width:144.5px;height:31.8px;background:#efeeef;border:1.6px solid #9e2436;border-radius:4px;box-sizing:border-box;"></div><svg style="position:absolute;left:609.8px;top:348.2px" width="11.5" height="11.5" viewBox="-5.75 -5.75 11.5 11.5"><path d="M-4.75 -4.75 L4.75 4.75 M4.75 -4.75 L-4.75 4.75" stroke="#c10f24" stroke-width="2.1" stroke-linecap="butt"/></svg><div style="position:absolute;left:629.3px;top:345.2px;font-size:16px;line-height:17px;color:#b0142b;font-weight:normal;white-space:nowrap;">Stomach (C16)</div><div style="position:absolute;left:751.5px;top:337.7px;width:266.8px;height:31.8px;background:#efeeef;border:1.6px solid #9e2436;border-radius:4px;box-sizing:border-box;"></div><svg style="position:absolute;left:760.2px;top:348.2px" width="11.5" height="11.5" viewBox="-5.75 -5.75 11.5 11.5"><path d="M-4.75 -4.75 L4.75 4.75 M4.75 -4.75 L-4.75 4.75" stroke="#c10f24" stroke-width="2.1" stroke-linecap="butt"/></svg><div style="position:absolute;left:779.8px;top:345.2px;font-size:16px;line-height:17px;color:#b0142b;font-weight:normal;white-space:nowrap;">Prop. unemployed of labor force</div><div style="position:absolute;left:1024.4px;top:337.7px;width:339.3px;height:31.8px;background:#efeeef;border:1.6px solid #9e2436;border-radius:4px;box-sizing:border-box;"></div><svg style="position:absolute;left:1033.2px;top:348.2px" width="11.5" height="11.5" viewBox="-5.75 -5.75 11.5 11.5"><path d="M-4.75 -4.75 L4.75 4.75 M4.75 -4.75 L-4.75 4.75" stroke="#c10f24" stroke-width="2.1" stroke-linecap="butt"/></svg><div style="position:absolute;left:1052.7px;top:345.2px;font-size:16px;line-height:17px;color:#b0142b;font-weight:normal;white-space:nowrap;">Prop. female population of total population</div><div style="position:absolute;left:1369.4px;top:337.7px;width:318.5px;height:31.8px;background:#efeeef;border:1.6px solid #9e2436;border-radius:4px;box-sizing:border-box;"></div><svg style="position:absolute;left:1378.2px;top:348.2px" width="11.5" height="11.5" viewBox="-5.75 -5.75 11.5 11.5"><path d="M-4.75 -4.75 L4.75 4.75 M4.75 -4.75 L-4.75 4.75" stroke="#c10f24" stroke-width="2.1" stroke-linecap="butt"/></svg><div style="position:absolute;left:1397.7px;top:345.2px;font-size:16px;line-height:17px;color:#b0142b;font-weight:normal;white-space:nowrap;">Prop. population &gt;60 of total population</div><div style="position:absolute;left:111.5px;top:427.5px;width:217.1px;height:32.1px;background:#f4f4f6;border:1px solid #e2e2e8;border-radius:3px;box-sizing:border-box;"></div><svg style="position:absolute;left:121.7px;top:436.6px" width="16" height="15.5" viewBox="0 0 16 15.5"><rect x="0.0" y="0.0" width="4.1" height="4.0" fill="#111"/><rect x="0.0" y="5.5" width="4.1" height="4.0" fill="#111"/><rect x="0.0" y="11.0" width="4.1" height="4.0" fill="#111"/><rect x="5.7" y="0.0" width="4.1" height="4.0" fill="#111"/><rect x="5.7" y="5.5" width="4.1" height="4.0" fill="#111"/><rect x="5.7" y="11.0" width="4.1" height="4.0" fill="#111"/><rect x="11.4" y="0.0" width="4.1" height="4.0" fill="#111"/><rect x="11.4" y="5.5" width="4.1" height="4.0" fill="#111"/><rect x="11.4" y="11.0" width="4.1" height="4.0" fill="#111"/></svg><div style="position:absolute;left:142.0px;top:435.3px;font-size:16px;line-height:17px;color:#1e1e1e;font-weight:normal;white-space:nowrap;">Switch to: Heatmap View</div><div style="position:absolute;left:334.3px;top:427.5px;width:112.7px;height:32.9px;background:#2c3d56;border:1px solid #1c2738;border-radius:4px;box-sizing:border-box;"></div><svg style="position:absolute;left:344.6px;top:436.4px" width="16" height="16" viewBox="0 0 16 16" fill="none" stroke="#fff" stroke-width="1.3"><rect x="0.8" y="0.8" width="14.4" height="14.4"/><path d="M3.5 5.5 L5.5 3.5 L8 5 M12.5 6 L10.5 4 M3.5 10 L6 12.5 M9 12 L12.5 9.5 M7 8 L9 7.5" stroke-width="1.2"/></svg><div style="position:absolute;left:365.4px;top:435.3px;font-size:16px;line-height:17px;color:#fff;font-weight:normal;white-space:nowrap;text-shadow:0 0 1px #0a1220;">Tiles View</div><div style="position:absolute;left:456.8px;top:433.0px;width:1.5px;height:17.0px;background:#333;"></div><div style="position:absolute;left:465.0px;top:427.5px;width:212.2px;height:32.1px;background:#f4f4f6;border:1px solid #e2e2e8;border-radius:3px;box-sizing:border-box;"></div><div style="position:absolute;left:474.5px;top:435.3px;font-size:16px;line-height:17px;color:#1e1e1e;font-weight:normal;white-space:nowrap;">Rearrange Tiles (3 per row)</div><div style="position:absolute;left:684.8px;top:427.5px;width:212.4px;height:32.1px;background:#f4f4f6;border:1px solid #e2e2e8;border-radius:3px;box-sizing:border-box;"></div><div style="position:absolute;left:694.3px;top:435.3px;font-size:16px;line-height:17px;color:#1e1e1e;font-weight:normal;white-space:nowrap;">Rearrange Tiles (4 per row)</div><div style="position:absolute;left:903.4px;top:427.5px;width:265.5px;height:32.1px;background:#f4f4f6;border:1px solid #e2e2e8;border-radius:3px;box-sizing:border-box;"></div><div style="position:absolute;left:912.9px;top:435.3px;font-size:16px;line-height:17px;color:#1e1e1e;font-weight:normal;white-space:nowrap;">Reset Maps Only (Zoom &amp; Center)</div><div style="position:absolute;left:99.4px;top:483.3px;width:1931.6px;height:513.7px;background:#f8f8fa;"></div><div style="position:absolute;left:117.0px;top:501.3px;width:460.0px;height:481.0px;background:#fff;border:1px solid #e7e7ea;border-radius:5px;box-sizing:border-box;"></div><div style="position:absolute;left:118.0px;top:556.5px;width:458.0px;height:1.0px;background:#ebebee;"></div><div style="position:absolute;left:134.0px;top:521.4px;font-size:16px;line-height:17px;color:#1e1e1e;font-weight:normal;white-space:nowrap;">Stomach (C16)</div><div style="position:absolute;left:528.5px;top:513.8px;width:29.5px;height:29.5px;background:#f5f5f5;border:1px solid #e3e3e3;border-radius:3px;box-sizing:border-box;"></div><svg style="position:absolute;left:537.0px;top:522.2px" width="12.6" height="12.6" viewBox="-6.3 -6.3 12.6 12.6"><path d="M-5.3 -5.3 L5.3 5.3 M5.3 -5.3 L-5.3 5.3" stroke="#111" stroke-width="2.2" stroke-linecap="butt"/></svg><svg style="position:absolute;left:134.0px;top:574.1px" width="426.5" height="338" viewBox="0 0 426.5 338"><use href="#basemap" x="0" y="0" width="426.5" height="338"/><g opacity="0.86" stroke="#dff4f0" stroke-width="0.8" stroke-opacity="0.7"><path d="M95.7 127.6 L106.0 114.5 L95.5 75.5 L76.7 80.2 L69.9 96.1 L62.7 114.7 Z" fill="#5ba8a3"/><path d="M202.9 21.2 L202.3 22.4 L202.3 22.9 L215.2 32.6 L236.3 25.5 L221.6 7.4 Z" fill="#69b0aa"/><path d="M261.6 144.4 L254.5 164.4 L271.1 173.7 L280.0 170.3 L286.2 159.3 Z" fill="#55a5a0"/><path d="M162.3 53.0 L154.1 51.3 L136.6 81.3 L146.9 91.0 L168.0 87.1 L169.4 69.9 Z" fill="#53a4a0"/><path d="M170.1 109.9 L170.7 89.8 L168.0 87.1 L146.9 91.0 L147.7 110.6 L154.4 116.7 Z" fill="#499e99"/><path d="M258.4 135.6 L255.3 128.3 L248.5 123.6 L242.9 124.6 L236.6 139.6 L246.1 150.0 L258.5 138.3 Z" fill="#60ada7"/><path d="M256.2 103.7 L253.0 91.0 L247.8 88.8 L239.0 93.6 L236.9 100.7 L252.6 109.0 Z" fill="#147b76"/><path d="M157.0 157.5 L149.6 136.3 L133.8 138.3 L121.2 150.2 L122.2 164.4 L122.3 164.4 L123.7 175.6 Z" fill="#469b96"/><path d="M230.0 47.8 L234.4 59.2 L236.1 61.2 L249.8 42.2 L242.2 32.8 Z" fill="#6bb2ac"/><path d="M240.8 165.0 L244.2 163.5 L246.1 150.0 L236.6 139.6 L223.8 149.2 L218.1 157.6 L221.9 162.8 Z" fill="#4ca39d"/><path d="M205.0 86.7 L208.5 88.9 L213.8 83.3 L216.3 71.5 L204.4 60.5 L201.5 60.7 L200.7 62.3 Z" fill="#499a96"/><path d="M269.3 76.4 L273.8 73.2 L265.8 61.9 L263.7 59.3 L265.1 74.1 Z" fill="#74bbb5"/><path d="M252.6 109.0 L236.9 100.7 L232.8 103.2 L226.0 118.0 L242.9 124.6 L248.5 123.6 Z" fill="#57a49e"/><path d="M190.5 85.3 L186.5 90.4 L191.8 102.7 L206.9 97.8 L207.3 97.4 L209.1 92.1 L208.5 88.9 L205.0 86.7 Z" fill="#499a96"/><path d="M222.9 119.1 L224.6 118.1 L220.3 107.6 L207.3 97.4 L206.9 97.8 L207.3 115.7 L219.4 119.9 Z" fill="#449b95"/><path d="M271.1 173.7 L260.1 193.2 L278.9 221.1 L287.9 181.6 L280.0 170.3 Z" fill="#52a29d"/><path d="M121.2 150.2 L95.8 128.0 L76.1 169.8 L122.2 164.4 Z" fill="#58a5a0"/><path d="M258.5 138.3 L246.1 150.0 L244.2 163.5 L254.5 164.4 L261.6 144.4 Z" fill="#4e9e99"/><path d="M265.1 74.1 L263.7 59.3 L261.0 56.1 L248.0 66.3 L257.9 75.4 Z" fill="#6bb2ac"/><path d="M154.1 51.3 L162.3 53.0 L182.7 43.5 L184.9 37.8 L159.8 0.0 L130.3 0.0 L147.3 18.7 L147.3 44.1 Z" fill="#59aaa4"/><path d="M214.9 301.4 L191.7 308.6 L191.3 325.4 L197.4 330.7 L225.0 338.0 L233.5 329.1 Z" fill="#68aea8"/><path d="M305.4 190.4 L311.9 217.6 L318.2 226.1 L345.7 218.6 L368.5 231.2 L365.8 221.7 L327.9 172.0 L316.0 175.6 Z" fill="#4a9a95"/><path d="M219.1 177.6 L199.6 195.3 L199.3 205.5 L202.5 202.2 L205.0 213.6 L205.3 214.2 L237.2 201.2 L238.8 198.1 Z" fill="#4e9e99"/><path d="M204.3 140.7 L207.2 153.3 L218.1 157.6 L223.8 149.2 L222.9 119.1 L219.4 119.9 Z" fill="#479e98"/><path d="M204.4 60.5 L208.5 57.0 L217.3 43.1 L215.2 32.6 L202.3 22.9 L184.9 37.8 L182.7 43.5 L201.5 60.7 Z" fill="#68afa9"/><path d="M181.4 131.4 L200.9 137.4 L198.3 116.9 L189.0 112.9 L183.7 115.6 Z" fill="#5faba5"/><path d="M217.3 43.1 L208.5 57.0 L234.4 59.2 L230.0 47.8 Z" fill="#70b7b1"/><path d="M218.1 157.6 L207.2 153.3 L192.2 159.9 L185.3 175.9 L199.6 195.3 L219.1 177.6 L221.9 162.8 Z" fill="#72b5af"/><path d="M201.5 60.7 L182.7 43.5 L162.3 53.0 L169.4 69.9 L190.2 74.5 L200.7 62.3 Z" fill="#53a4a0"/><path d="M257.9 75.4 L248.0 66.3 L238.3 67.8 L237.2 69.8 L247.8 88.8 L253.0 91.0 L255.5 88.8 Z" fill="#6cb3ad"/><path d="M275.3 112.4 L272.6 106.4 L267.2 103.9 L256.2 103.7 L252.6 109.0 L248.5 123.6 L255.3 128.3 L260.6 126.1 Z" fill="#5ca9a3"/><path d="M240.8 165.0 L221.9 162.8 L219.1 177.6 L238.8 198.1 L245.5 194.1 Z" fill="#4d9d98"/><path d="M202.3 22.4 L173.0 0.0 L159.8 0.0 L184.9 37.8 L202.3 22.9 Z" fill="#6cb3ad"/><path d="M245.1 282.2 L251.4 266.5 L267.8 255.1 L268.7 237.2 L249.1 233.4 L232.4 238.9 L229.4 279.1 Z" fill="#6cb2ac"/><path d="M236.9 100.7 L239.0 93.6 L228.2 88.2 L225.4 93.5 L232.8 103.2 Z" fill="#117873"/><path d="M303.7 145.9 L301.9 118.9 L289.0 118.4 L286.3 119.4 L282.5 127.5 L282.2 137.0 L290.5 154.4 Z" fill="#6fb4ae"/><path d="M158.3 157.9 L170.6 177.9 L185.3 175.9 L192.2 159.9 L177.0 148.3 Z" fill="#5ba7a1"/><path d="M280.8 98.5 L272.4 87.0 L271.4 86.8 L267.2 103.9 L272.6 106.4 Z" fill="#5ba8a2"/><path d="M170.1 109.9 L154.4 116.7 L154.7 129.0 L176.7 136.1 L181.4 131.4 L183.7 115.6 Z" fill="#54a09a"/><path d="M181.4 131.4 L176.7 136.1 L177.0 148.3 L192.2 159.9 L207.2 153.3 L204.3 140.7 L200.9 137.4 Z" fill="#5da9a3"/><path d="M106.0 114.5 L120.3 112.0 L130.4 81.9 L108.3 72.3 L104.1 73.3 L95.5 75.5 Z" fill="#439893"/><path d="M301.9 118.9 L305.1 116.4 L299.9 109.8 L289.7 95.4 L288.0 96.9 L289.0 118.4 Z" fill="#5eaba5"/><path d="M289.3 156.7 L316.0 175.6 L327.9 172.0 L332.3 149.9 L329.7 146.9 L303.7 145.9 L290.5 154.4 Z" fill="#4a9a95"/><path d="M269.8 85.6 L269.3 76.4 L265.1 74.1 L257.9 75.4 L255.5 88.8 Z" fill="#67aea8"/><path d="M200.9 137.4 L204.3 140.7 L219.4 119.9 L207.3 115.7 L198.3 116.9 Z" fill="#56a29c"/><path d="M226.0 118.0 L232.8 103.2 L225.4 93.5 L222.4 95.1 L220.3 107.6 L224.6 118.1 Z" fill="#57a49e"/><path d="M301.9 118.9 L303.7 145.9 L329.7 146.9 L325.0 141.7 L305.1 116.4 Z" fill="#6bb0aa"/><path d="M248.0 66.3 L261.0 56.1 L249.8 42.2 L236.1 61.2 L238.3 67.8 Z" fill="#70b7b1"/><path d="M160.8 190.3 L165.6 189.5 L182.4 198.6 L194.9 210.0 L199.3 205.5 L199.6 195.3 L185.3 175.9 L170.6 177.9 Z" fill="#5eaaa4"/><path d="M208.5 88.9 L209.1 92.1 L222.4 95.1 L225.4 93.5 L228.2 88.2 L228.0 86.7 L213.8 83.3 Z" fill="#489f99"/><path d="M213.8 83.3 L228.0 86.7 L234.0 71.8 L216.3 71.5 Z" fill="#4ca39d"/><path d="M190.5 85.3 L190.2 74.5 L169.4 69.9 L168.0 87.1 L170.7 89.8 L186.5 90.4 Z" fill="#1a837e"/><path d="M214.9 301.4 L233.5 329.1 L238.4 323.8 L241.4 291.5 L245.1 282.2 L229.4 279.1 L226.3 280.1 Z" fill="#69afa9"/><path d="M120.3 112.0 L126.5 114.6 L147.7 110.6 L146.9 91.0 L136.6 81.3 L130.4 81.9 Z" fill="#4fa49f"/><path d="M289.0 118.4 L288.0 96.9 L280.8 98.5 L272.6 106.4 L275.3 112.4 L286.3 119.4 Z" fill="#5ba8a2"/><path d="M267.2 103.9 L271.4 86.8 L269.8 85.6 L255.5 88.8 L253.0 91.0 L256.2 103.7 Z" fill="#63b0aa"/><path d="M365.8 221.7 L356.9 189.5 L343.2 162.1 L332.3 149.9 L327.9 172.0 Z" fill="#51a19c"/><path d="M232.4 238.9 L249.1 233.4 L237.2 201.2 L205.3 214.2 L215.0 228.6 L210.4 231.6 Z" fill="#51a19c"/><path d="M254.5 164.4 L244.2 163.5 L240.8 165.0 L245.5 194.1 L260.1 193.2 L271.1 173.7 Z" fill="#489893"/><path d="M189.0 112.9 L191.8 102.7 L186.5 90.4 L170.7 89.8 L170.1 109.9 L183.7 115.6 Z" fill="#55a19b"/><path d="M133.8 138.3 L126.5 114.6 L120.3 112.0 L106.0 114.5 L95.7 127.6 L95.8 128.0 L121.2 150.2 Z" fill="#439893"/><path d="M275.3 112.4 L260.6 126.1 L282.5 127.5 L286.3 119.4 Z" fill="#5ba8a2"/><path d="M288.0 96.9 L289.7 95.4 L281.6 84.1 L272.4 87.0 L280.8 98.5 Z" fill="#64b1ab"/><path d="M176.7 136.1 L154.7 129.0 L149.6 136.3 L157.0 157.5 L158.3 157.9 L177.0 148.3 Z" fill="#60aca6"/><path d="M238.8 198.1 L237.2 201.2 L249.1 233.4 L268.7 237.2 L269.2 226.1 L280.5 225.5 L278.9 221.1 L260.1 193.2 L245.5 194.1 Z" fill="#53a39e"/><path d="M130.4 81.9 L136.6 81.3 L154.1 51.3 L147.3 44.1 L147.3 57.4 L124.6 61.9 L122.3 68.8 L108.3 72.3 Z" fill="#489995"/><path d="M289.3 156.7 L290.5 154.4 L282.2 137.0 L258.4 135.6 L258.5 138.3 L261.6 144.4 L286.2 159.3 Z" fill="#51a19c"/><path d="M157.0 157.5 L123.7 175.6 L124.6 182.6 L131.4 203.1 L151.9 191.8 L160.8 190.3 L170.6 177.9 L158.3 157.9 Z" fill="#4da29d"/><path d="M202.9 21.2 L200.3 0.0 L173.0 0.0 L202.3 22.4 Z" fill="#72b9b3"/><path d="M269.8 85.6 L271.4 86.8 L272.4 87.0 L281.6 84.1 L273.8 73.2 L269.3 76.4 Z" fill="#4ea59f"/><path d="M198.3 116.9 L207.3 115.7 L206.9 97.8 L191.8 102.7 L189.0 112.9 Z" fill="#55a19b"/><path d="M222.4 95.1 L209.1 92.1 L207.3 97.4 L220.3 107.6 Z" fill="#59a6a0"/><path d="M214.9 301.4 L226.3 280.1 L196.4 264.0 L192.4 274.0 L191.7 308.6 Z" fill="#6eb4ae"/><path d="M95.8 128.0 L95.7 127.6 L62.7 114.7 L58.5 125.7 L63.1 171.3 L76.1 169.8 Z" fill="#5daaa5"/><path d="M154.4 116.7 L147.7 110.6 L126.5 114.6 L133.8 138.3 L149.6 136.3 L154.7 129.0 Z" fill="#4fa49f"/><path d="M222.9 119.1 L223.8 149.2 L236.6 139.6 L242.9 124.6 L226.0 118.0 L224.6 118.1 Z" fill="#5daaa4"/><path d="M221.6 7.4 L215.7 0.0 L200.3 0.0 L202.9 21.2 Z" fill="#73bab4"/><path d="M226.3 280.1 L229.4 279.1 L232.4 238.9 L210.4 231.6 L208.8 232.5 L196.4 264.0 Z" fill="#76b3ad"/><path d="M278.9 221.1 L280.5 225.5 L290.6 225.0 L308.1 212.5 L311.9 217.6 L305.4 190.4 L287.9 181.6 Z" fill="#50a7a1"/><path d="M215.2 32.6 L217.3 43.1 L230.0 47.8 L242.2 32.8 L236.3 25.5 Z" fill="#73bab4"/><path d="M282.2 137.0 L282.5 127.5 L260.6 126.1 L255.3 128.3 L258.4 135.6 Z" fill="#5ba8a2"/><path d="M247.8 88.8 L237.2 69.8 L234.0 71.8 L228.0 86.7 L228.2 88.2 L239.0 93.6 Z" fill="#67aea8"/><path d="M280.0 170.3 L287.9 181.6 L305.4 190.4 L316.0 175.6 L289.3 156.7 L286.2 159.3 Z" fill="#4f9f9a"/><path d="M216.3 71.5 L234.0 71.8 L237.2 69.8 L238.3 67.8 L236.1 61.2 L234.4 59.2 L208.5 57.0 L204.4 60.5 Z" fill="#70b7b1"/><path d="M190.2 74.5 L190.5 85.3 L205.0 86.7 L200.7 62.3 Z" fill="#18817c"/></g><circle cx="43.8" cy="43.3" r="26.8" fill="#f5f4f5" fill-opacity="0.95"/><path d="M39.3 31.8 L48.3 31.8 L43.8 25.2 Z M39.3 54.6 L48.3 54.6 L43.8 61.3 Z M32 38.8 L32 47.8 L25.4 43.3 Z M55.6 38.8 L55.6 47.8 L62.2 43.3 Z" fill="#111"/><rect x="105.5" y="28.8" width="57.7" height="29.4" rx="4" fill="#f5f4f5" fill-opacity="0.97"/><rect x="133.3" y="29.5" width="0.8" height="28" fill="#dedede"/><path d="M114.3 43.3 H125.3 M119.8 37.8 V48.8 M143.3 43.3 H154.3" stroke="#111" stroke-width="2.3"/></svg><div style="position:absolute;left:144.6px;top:932.0px;width:405.3px;height:8.2px;background:linear-gradient(90deg,#94c8c5,#5aaba6 50%,#147e79);"></div><div style="position:absolute;left:144.6px;top:949.3px;font-size:16px;line-height:17px;color:#1e1e1e;font-weight:normal;white-space:nowrap;">0.0000 [n]</div><div style="position:absolute;right:1505.1px;top:949.3px;font-size:16px;line-height:17px;color:#1e1e1e;font-weight:normal;white-space:nowrap;text-align:right;">10.0000 [n]</div><div style="position:absolute;left:595.8px;top:501.3px;width:460.0px;height:481.0px;background:#fff;border:1px solid #e7e7ea;border-radius:5px;box-sizing:border-box;"></div><div style="position:absolute;left:596.8px;top:556.5px;width:458.0px;height:1.0px;background:#ebebee;"></div><div style="position:absolute;left:612.8px;top:521.4px;font-size:16px;line-height:17px;color:#1e1e1e;font-weight:normal;white-space:nowrap;">Prop. female population of total population</div><div style="position:absolute;left:1007.3px;top:513.8px;width:29.5px;height:29.5px;background:#f5f5f5;border:1px solid #e3e3e3;border-radius:3px;box-sizing:border-box;"></div><svg style="position:absolute;left:1015.8px;top:522.2px" width="12.6" height="12.6" viewBox="-6.3 -6.3 12.6 12.6"><path d="M-5.3 -5.3 L5.3 5.3 M5.3 -5.3 L-5.3 5.3" stroke="#111" stroke-width="2.2" stroke-linecap="butt"/></svg><svg style="position:absolute;left:612.8px;top:574.1px" width="426.5" height="338" viewBox="0 0 426.5 338"><use href="#basemap" x="0" y="0" width="426.5" height="338"/><g opacity="0.9" stroke="#dff4f0" stroke-width="0.8" stroke-opacity="0.7"><path d="M95.7 127.6 L106.0 114.5 L95.5 75.5 L76.7 80.2 L69.9 96.1 L62.7 114.7 Z" fill="#198782"/><path d="M202.9 21.2 L202.3 22.4 L202.3 22.9 L215.2 32.6 L236.3 25.5 L221.6 7.4 Z" fill="#3b9d97"/><path d="M261.6 144.4 L254.5 164.4 L271.1 173.7 L280.0 170.3 L286.2 159.3 Z" fill="#208a85"/><path d="M162.3 53.0 L154.1 51.3 L136.6 81.3 L146.9 91.0 L168.0 87.1 L169.4 69.9 Z" fill="#40a09a"/><path d="M170.1 109.9 L170.7 89.8 L168.0 87.1 L146.9 91.0 L147.7 110.6 L154.4 116.7 Z" fill="#2b928d"/><path d="M258.4 135.6 L255.3 128.3 L248.5 123.6 L242.9 124.6 L236.6 139.6 L246.1 150.0 L258.5 138.3 Z" fill="#2b938d"/><path d="M256.2 103.7 L253.0 91.0 L247.8 88.8 L239.0 93.6 L236.9 100.7 L252.6 109.0 Z" fill="#2e9690"/><path d="M157.0 157.5 L149.6 136.3 L133.8 138.3 L121.2 150.2 L122.2 164.4 L122.3 164.4 L123.7 175.6 Z" fill="#2a918c"/><path d="M230.0 47.8 L234.4 59.2 L236.1 61.2 L249.8 42.2 L242.2 32.8 Z" fill="#33958f"/><path d="M240.8 165.0 L244.2 163.5 L246.1 150.0 L236.6 139.6 L223.8 149.2 L218.1 157.6 L221.9 162.8 Z" fill="#23908a"/><path d="M205.0 86.7 L208.5 88.9 L213.8 83.3 L216.3 71.5 L204.4 60.5 L201.5 60.7 L200.7 62.3 Z" fill="#24908b"/><path d="M269.3 76.4 L273.8 73.2 L265.8 61.9 L263.7 59.3 L265.1 74.1 Z" fill="#3a9c96"/><path d="M252.6 109.0 L236.9 100.7 L232.8 103.2 L226.0 118.0 L242.9 124.6 L248.5 123.6 Z" fill="#329a94"/><path d="M190.5 85.3 L186.5 90.4 L191.8 102.7 L206.9 97.8 L207.3 97.4 L209.1 92.1 L208.5 88.9 L205.0 86.7 Z" fill="#26928d"/><path d="M222.9 119.1 L224.6 118.1 L220.3 107.6 L207.3 97.4 L206.9 97.8 L207.3 115.7 L219.4 119.9 Z" fill="#90c4be"/><path d="M271.1 173.7 L260.1 193.2 L278.9 221.1 L287.9 181.6 L280.0 170.3 Z" fill="#218b86"/><path d="M121.2 150.2 L95.8 128.0 L76.1 169.8 L122.2 164.4 Z" fill="#188681"/><path d="M258.5 138.3 L246.1 150.0 L244.2 163.5 L254.5 164.4 L261.6 144.4 Z" fill="#92c7c1"/><path d="M265.1 74.1 L263.7 59.3 L261.0 56.1 L248.0 66.3 L257.9 75.4 Z" fill="#3c9e98"/><path d="M154.1 51.3 L162.3 53.0 L182.7 43.5 L184.9 37.8 L159.8 0.0 L130.3 0.0 L147.3 18.7 L147.3 44.1 Z" fill="#208e89"/><path d="M214.9 301.4 L191.7 308.6 L191.3 325.4 L197.4 330.7 L225.0 338.0 L233.5 329.1 Z" fill="#208c87"/><path d="M305.4 190.4 L311.9 217.6 L318.2 226.1 L345.7 218.6 L368.5 231.2 L365.8 221.7 L327.9 172.0 L316.0 175.6 Z" fill="#1f8c87"/><path d="M219.1 177.6 L199.6 195.3 L199.3 205.5 L202.5 202.2 L205.0 213.6 L205.3 214.2 L237.2 201.2 L238.8 198.1 Z" fill="#8abfb9"/><path d="M204.3 140.7 L207.2 153.3 L218.1 157.6 L223.8 149.2 L222.9 119.1 L219.4 119.9 Z" fill="#23908a"/><path d="M204.4 60.5 L208.5 57.0 L217.3 43.1 L215.2 32.6 L202.3 22.9 L184.9 37.8 L182.7 43.5 L201.5 60.7 Z" fill="#359791"/><path d="M181.4 131.4 L200.9 137.4 L198.3 116.9 L189.0 112.9 L183.7 115.6 Z" fill="#2b938e"/><path d="M217.3 43.1 L208.5 57.0 L234.4 59.2 L230.0 47.8 Z" fill="#3b9d97"/><path d="M218.1 157.6 L207.2 153.3 L192.2 159.9 L185.3 175.9 L199.6 195.3 L219.1 177.6 L221.9 162.8 Z" fill="#90c5bf"/><path d="M201.5 60.7 L182.7 43.5 L162.3 53.0 L169.4 69.9 L190.2 74.5 L200.7 62.3 Z" fill="#1f8b86"/><path d="M257.9 75.4 L248.0 66.3 L238.3 67.8 L237.2 69.8 L247.8 88.8 L253.0 91.0 L255.5 88.8 Z" fill="#349690"/><path d="M275.3 112.4 L272.6 106.4 L267.2 103.9 L256.2 103.7 L252.6 109.0 L248.5 123.6 L255.3 128.3 L260.6 126.1 Z" fill="#2a928c"/><path d="M240.8 165.0 L221.9 162.8 L219.1 177.6 L238.8 198.1 L245.5 194.1 Z" fill="#90c5bf"/><path d="M202.3 22.4 L173.0 0.0 L159.8 0.0 L184.9 37.8 L202.3 22.9 Z" fill="#3a9c96"/><path d="M245.1 282.2 L251.4 266.5 L267.8 255.1 L268.7 237.2 L249.1 233.4 L232.4 238.9 L229.4 279.1 Z" fill="#24908b"/><path d="M236.9 100.7 L239.0 93.6 L228.2 88.2 L225.4 93.5 L232.8 103.2 Z" fill="#2c948e"/><path d="M303.7 145.9 L301.9 118.9 L289.0 118.4 L286.3 119.4 L282.5 127.5 L282.2 137.0 L290.5 154.4 Z" fill="#3d9b96"/><path d="M158.3 157.9 L170.6 177.9 L185.3 175.9 L192.2 159.9 L177.0 148.3 Z" fill="#2f9792"/><path d="M280.8 98.5 L272.4 87.0 L271.4 86.8 L267.2 103.9 L272.6 106.4 Z" fill="#28908a"/><path d="M170.1 109.9 L154.4 116.7 L154.7 129.0 L176.7 136.1 L181.4 131.4 L183.7 115.6 Z" fill="#258d88"/><path d="M181.4 131.4 L176.7 136.1 L177.0 148.3 L192.2 159.9 L207.2 153.3 L204.3 140.7 L200.9 137.4 Z" fill="#2b938e"/><path d="M106.0 114.5 L120.3 112.0 L130.4 81.9 L108.3 72.3 L104.1 73.3 L95.5 75.5 Z" fill="#2b928d"/><path d="M301.9 118.9 L305.1 116.4 L299.9 109.8 L289.7 95.4 L288.0 96.9 L289.0 118.4 Z" fill="#2c948e"/><path d="M289.3 156.7 L316.0 175.6 L327.9 172.0 L332.3 149.9 L329.7 146.9 L303.7 145.9 L290.5 154.4 Z" fill="#1f8c87"/><path d="M269.8 85.6 L269.3 76.4 L265.1 74.1 L257.9 75.4 L255.5 88.8 Z" fill="#399b95"/><path d="M200.9 137.4 L204.3 140.7 L219.4 119.9 L207.3 115.7 L198.3 116.9 Z" fill="#2c948f"/><path d="M226.0 118.0 L232.8 103.2 L225.4 93.5 L222.4 95.1 L220.3 107.6 L224.6 118.1 Z" fill="#329a94"/><path d="M301.9 118.9 L303.7 145.9 L329.7 146.9 L325.0 141.7 L305.1 116.4 Z" fill="#43a19c"/><path d="M248.0 66.3 L261.0 56.1 L249.8 42.2 L236.1 61.2 L238.3 67.8 Z" fill="#3b9d97"/><path d="M160.8 190.3 L165.6 189.5 L182.4 198.6 L194.9 210.0 L199.3 205.5 L199.6 195.3 L185.3 175.9 L170.6 177.9 Z" fill="#29918c"/><path d="M208.5 88.9 L209.1 92.1 L222.4 95.1 L225.4 93.5 L228.2 88.2 L228.0 86.7 L213.8 83.3 Z" fill="#299690"/><path d="M213.8 83.3 L228.0 86.7 L234.0 71.8 L216.3 71.5 Z" fill="#228f89"/><path d="M190.5 85.3 L190.2 74.5 L169.4 69.9 L168.0 87.1 L170.7 89.8 L186.5 90.4 Z" fill="#24908b"/><path d="M214.9 301.4 L233.5 329.1 L238.4 323.8 L241.4 291.5 L245.1 282.2 L229.4 279.1 L226.3 280.1 Z" fill="#26928d"/><path d="M120.3 112.0 L126.5 114.6 L147.7 110.6 L146.9 91.0 L136.6 81.3 L130.4 81.9 Z" fill="#2c938e"/><path d="M289.0 118.4 L288.0 96.9 L280.8 98.5 L272.6 106.4 L275.3 112.4 L286.3 119.4 Z" fill="#2b938d"/><path d="M267.2 103.9 L271.4 86.8 L269.8 85.6 L255.5 88.8 L253.0 91.0 L256.2 103.7 Z" fill="#309892"/><path d="M365.8 221.7 L356.9 189.5 L343.2 162.1 L332.3 149.9 L327.9 172.0 Z" fill="#208d88"/><path d="M232.4 238.9 L249.1 233.4 L237.2 201.2 L205.3 214.2 L215.0 228.6 L210.4 231.6 Z" fill="#93c8c2"/><path d="M254.5 164.4 L244.2 163.5 L240.8 165.0 L245.5 194.1 L260.1 193.2 L271.1 173.7 Z" fill="#26908b"/><path d="M189.0 112.9 L191.8 102.7 L186.5 90.4 L170.7 89.8 L170.1 109.9 L183.7 115.6 Z" fill="#2a928d"/><path d="M133.8 138.3 L126.5 114.6 L120.3 112.0 L106.0 114.5 L95.7 127.6 L95.8 128.0 L121.2 150.2 Z" fill="#309792"/><path d="M275.3 112.4 L260.6 126.1 L282.5 127.5 L286.3 119.4 Z" fill="#2d958f"/><path d="M288.0 96.9 L289.7 95.4 L281.6 84.1 L272.4 87.0 L280.8 98.5 Z" fill="#2b938d"/><path d="M176.7 136.1 L154.7 129.0 L149.6 136.3 L157.0 157.5 L158.3 157.9 L177.0 148.3 Z" fill="#309893"/><path d="M238.8 198.1 L237.2 201.2 L249.1 233.4 L268.7 237.2 L269.2 226.1 L280.5 225.5 L278.9 221.1 L260.1 193.2 L245.5 194.1 Z" fill="#2b9590"/><path d="M130.4 81.9 L136.6 81.3 L154.1 51.3 L147.3 44.1 L147.3 57.4 L124.6 61.9 L122.3 68.8 L108.3 72.3 Z" fill="#399993"/><path d="M289.3 156.7 L290.5 154.4 L282.2 137.0 L258.4 135.6 L258.5 138.3 L261.6 144.4 L286.2 159.3 Z" fill="#57a6a0"/><path d="M157.0 157.5 L123.7 175.6 L124.6 182.6 L131.4 203.1 L151.9 191.8 L160.8 190.3 L170.6 177.9 L158.3 157.9 Z" fill="#2f9691"/><path d="M202.9 21.2 L200.3 0.0 L173.0 0.0 L202.3 22.4 Z" fill="#3fa19b"/><path d="M269.8 85.6 L271.4 86.8 L272.4 87.0 L281.6 84.1 L273.8 73.2 L269.3 76.4 Z" fill="#218e88"/><path d="M198.3 116.9 L207.3 115.7 L206.9 97.8 L191.8 102.7 L189.0 112.9 Z" fill="#8ec2bc"/><path d="M222.4 95.1 L209.1 92.1 L207.3 97.4 L220.3 107.6 Z" fill="#94c8c2"/><path d="M214.9 301.4 L226.3 280.1 L196.4 264.0 L192.4 274.0 L191.7 308.6 Z" fill="#27938e"/><path d="M95.8 128.0 L95.7 127.6 L62.7 114.7 L58.5 125.7 L63.1 171.3 L76.1 169.8 Z" fill="#198782"/><path d="M154.4 116.7 L147.7 110.6 L126.5 114.6 L133.8 138.3 L149.6 136.3 L154.7 129.0 Z" fill="#29908b"/><path d="M222.9 119.1 L223.8 149.2 L236.6 139.6 L242.9 124.6 L226.0 118.0 L224.6 118.1 Z" fill="#2f9791"/><path d="M221.6 7.4 L215.7 0.0 L200.3 0.0 L202.9 21.2 Z" fill="#369892"/><path d="M226.3 280.1 L229.4 279.1 L232.4 238.9 L210.4 231.6 L208.8 232.5 L196.4 264.0 Z" fill="#1f8b86"/><path d="M278.9 221.1 L280.5 225.5 L290.6 225.0 L308.1 212.5 L311.9 217.6 L305.4 190.4 L287.9 181.6 Z" fill="#1e8b85"/><path d="M215.2 32.6 L217.3 43.1 L230.0 47.8 L242.2 32.8 L236.3 25.5 Z" fill="#399b95"/><path d="M282.2 137.0 L282.5 127.5 L260.6 126.1 L255.3 128.3 L258.4 135.6 Z" fill="#29918b"/><path d="M247.8 88.8 L237.2 69.8 L234.0 71.8 L228.0 86.7 L228.2 88.2 L239.0 93.6 Z" fill="#349690"/><path d="M280.0 170.3 L287.9 181.6 L305.4 190.4 L316.0 175.6 L289.3 156.7 L286.2 159.3 Z" fill="#1d8a85"/><path d="M216.3 71.5 L234.0 71.8 L237.2 69.8 L238.3 67.8 L236.1 61.2 L234.4 59.2 L208.5 57.0 L204.4 60.5 Z" fill="#359791"/><path d="M190.2 74.5 L190.5 85.3 L205.0 86.7 L200.7 62.3 Z" fill="#1d8984"/></g><circle cx="43.8" cy="43.3" r="26.8" fill="#f5f4f5" fill-opacity="0.95"/><path d="M39.3 31.8 L48.3 31.8 L43.8 25.2 Z M39.3 54.6 L48.3 54.6 L43.8 61.3 Z M32 38.8 L32 47.8 L25.4 43.3 Z M55.6 38.8 L55.6 47.8 L62.2 43.3 Z" fill="#111"/><rect x="105.5" y="28.8" width="57.7" height="29.4" rx="4" fill="#f5f4f5" fill-opacity="0.97"/><rect x="133.3" y="29.5" width="0.8" height="28" fill="#dedede"/><path d="M114.3 43.3 H125.3 M119.8 37.8 V48.8 M143.3 43.3 H154.3" stroke="#111" stroke-width="2.3"/></svg><div style="position:absolute;left:623.4px;top:932.0px;width:405.3px;height:8.2px;background:linear-gradient(90deg,#94c8c5,#5aaba6 50%,#147e79);"></div><div style="position:absolute;left:623.4px;top:949.3px;font-size:16px;line-height:17px;color:#1e1e1e;font-weight:normal;white-space:nowrap;">0.4309 [%]</div><div style="position:absolute;right:1026.3px;top:949.3px;font-size:16px;line-height:17px;color:#1e1e1e;font-weight:normal;white-space:nowrap;text-align:right;">0.5359 [%]</div><div style="position:absolute;left:1074.2px;top:501.3px;width:460.0px;height:481.0px;background:#fff;border:1px solid #e7e7ea;border-radius:5px;box-sizing:border-box;"></div><div style="position:absolute;left:1075.2px;top:556.5px;width:458.0px;height:1.0px;background:#ebebee;"></div><div style="position:absolute;left:1091.2px;top:521.4px;font-size:16px;line-height:17px;color:#1e1e1e;font-weight:normal;white-space:nowrap;">Prop. population &gt;60 of total population</div><div style="position:absolute;left:1485.7px;top:513.8px;width:29.5px;height:29.5px;background:#f5f5f5;border:1px solid #e3e3e3;border-radius:3px;box-sizing:border-box;"></div><svg style="position:absolute;left:1494.2px;top:522.2px" width="12.6" height="12.6" viewBox="-6.3 -6.3 12.6 12.6"><path d="M-5.3 -5.3 L5.3 5.3 M5.3 -5.3 L-5.3 5.3" stroke="#111" stroke-width="2.2" stroke-linecap="butt"/></svg><svg style="position:absolute;left:1091.2px;top:574.1px" width="426.5" height="338" viewBox="0 0 426.5 338"><use href="#basemap" x="0" y="0" width="426.5" height="338"/><g opacity="0.9" stroke="#dff4f0" stroke-width="0.8" stroke-opacity="0.7"><path d="M95.7 127.6 L106.0 114.5 L95.5 75.5 L76.7 80.2 L69.9 96.1 L62.7 114.7 Z" fill="#3a9994"/><path d="M202.9 21.2 L202.3 22.4 L202.3 22.9 L215.2 32.6 L236.3 25.5 L221.6 7.4 Z" fill="#4fa29d"/><path d="M261.6 144.4 L254.5 164.4 L271.1 173.7 L280.0 170.3 L286.2 159.3 Z" fill="#28938d"/><path d="M162.3 53.0 L154.1 51.3 L136.6 81.3 L146.9 91.0 L168.0 87.1 L169.4 69.9 Z" fill="#419d98"/><path d="M170.1 109.9 L170.7 89.8 L168.0 87.1 L146.9 91.0 L147.7 110.6 L154.4 116.7 Z" fill="#399691"/><path d="M258.4 135.6 L255.3 128.3 L248.5 123.6 L242.9 124.6 L236.6 139.6 L246.1 150.0 L258.5 138.3 Z" fill="#449994"/><path d="M256.2 103.7 L253.0 91.0 L247.8 88.8 L239.0 93.6 L236.9 100.7 L252.6 109.0 Z" fill="#4ba09b"/><path d="M157.0 157.5 L149.6 136.3 L133.8 138.3 L121.2 150.2 L122.2 164.4 L122.3 164.4 L123.7 175.6 Z" fill="#17827d"/><path d="M230.0 47.8 L234.4 59.2 L236.1 61.2 L249.8 42.2 L242.2 32.8 Z" fill="#4ea19c"/><path d="M240.8 165.0 L244.2 163.5 L246.1 150.0 L236.6 139.6 L223.8 149.2 L218.1 157.6 L221.9 162.8 Z" fill="#369994"/><path d="M205.0 86.7 L208.5 88.9 L213.8 83.3 L216.3 71.5 L204.4 60.5 L201.5 60.7 L200.7 62.3 Z" fill="#439f9a"/><path d="M269.3 76.4 L273.8 73.2 L265.8 61.9 L263.7 59.3 L265.1 74.1 Z" fill="#4a9d98"/><path d="M252.6 109.0 L236.9 100.7 L232.8 103.2 L226.0 118.0 L242.9 124.6 L248.5 123.6 Z" fill="#449994"/><path d="M190.5 85.3 L186.5 90.4 L191.8 102.7 L206.9 97.8 L207.3 97.4 L209.1 92.1 L208.5 88.9 L205.0 86.7 Z" fill="#3a9691"/><path d="M222.9 119.1 L224.6 118.1 L220.3 107.6 L207.3 97.4 L206.9 97.8 L207.3 115.7 L219.4 119.9 Z" fill="#359893"/><path d="M271.1 173.7 L260.1 193.2 L278.9 221.1 L287.9 181.6 L280.0 170.3 Z" fill="#1e8983"/><path d="M121.2 150.2 L95.8 128.0 L76.1 169.8 L122.2 164.4 Z" fill="#308f8a"/><path d="M258.5 138.3 L246.1 150.0 L244.2 163.5 L254.5 164.4 L261.6 144.4 Z" fill="#469994"/><path d="M265.1 74.1 L263.7 59.3 L261.0 56.1 L248.0 66.3 L257.9 75.4 Z" fill="#4a9d98"/><path d="M154.1 51.3 L162.3 53.0 L182.7 43.5 L184.9 37.8 L159.8 0.0 L130.3 0.0 L147.3 18.7 L147.3 44.1 Z" fill="#2e948f"/><path d="M214.9 301.4 L191.7 308.6 L191.3 325.4 L197.4 330.7 L225.0 338.0 L233.5 329.1 Z" fill="#157f7a"/><path d="M305.4 190.4 L311.9 217.6 L318.2 226.1 L345.7 218.6 L368.5 231.2 L365.8 221.7 L327.9 172.0 L316.0 175.6 Z" fill="#1d8984"/><path d="M219.1 177.6 L199.6 195.3 L199.3 205.5 L202.5 202.2 L205.0 213.6 L205.3 214.2 L237.2 201.2 L238.8 198.1 Z" fill="#4fa29d"/><path d="M204.3 140.7 L207.2 153.3 L218.1 157.6 L223.8 149.2 L222.9 119.1 L219.4 119.9 Z" fill="#349792"/><path d="M204.4 60.5 L208.5 57.0 L217.3 43.1 L215.2 32.6 L202.3 22.9 L184.9 37.8 L182.7 43.5 L201.5 60.7 Z" fill="#4ea19c"/><path d="M181.4 131.4 L200.9 137.4 L198.3 116.9 L189.0 112.9 L183.7 115.6 Z" fill="#5eaaa5"/><path d="M217.3 43.1 L208.5 57.0 L234.4 59.2 L230.0 47.8 Z" fill="#51a49f"/><path d="M218.1 157.6 L207.2 153.3 L192.2 159.9 L185.3 175.9 L199.6 195.3 L219.1 177.6 L221.9 162.8 Z" fill="#5eaaa5"/><path d="M201.5 60.7 L182.7 43.5 L162.3 53.0 L169.4 69.9 L190.2 74.5 L200.7 62.3 Z" fill="#3a9691"/><path d="M257.9 75.4 L248.0 66.3 L238.3 67.8 L237.2 69.8 L247.8 88.8 L253.0 91.0 L255.5 88.8 Z" fill="#4ea19c"/><path d="M275.3 112.4 L272.6 106.4 L267.2 103.9 L256.2 103.7 L252.6 109.0 L248.5 123.6 L255.3 128.3 L260.6 126.1 Z" fill="#4ba09b"/><path d="M240.8 165.0 L221.9 162.8 L219.1 177.6 L238.8 198.1 L245.5 194.1 Z" fill="#52a5a0"/><path d="M202.3 22.4 L173.0 0.0 L159.8 0.0 L184.9 37.8 L202.3 22.9 Z" fill="#51a49f"/><path d="M245.1 282.2 L251.4 266.5 L267.8 255.1 L268.7 237.2 L249.1 233.4 L232.4 238.9 L229.4 279.1 Z" fill="#51a29d"/><path d="M236.9 100.7 L239.0 93.6 L228.2 88.2 L225.4 93.5 L232.8 103.2 Z" fill="#469b96"/><path d="M303.7 145.9 L301.9 118.9 L289.0 118.4 L286.3 119.4 L282.5 127.5 L282.2 137.0 L290.5 154.4 Z" fill="#3b9792"/><path d="M158.3 157.9 L170.6 177.9 L185.3 175.9 L192.2 159.9 L177.0 148.3 Z" fill="#56a29d"/><path d="M280.8 98.5 L272.4 87.0 L271.4 86.8 L267.2 103.9 L272.6 106.4 Z" fill="#50a5a0"/><path d="M170.1 109.9 L154.4 116.7 L154.7 129.0 L176.7 136.1 L181.4 131.4 L183.7 115.6 Z" fill="#5faba6"/><path d="M181.4 131.4 L176.7 136.1 L177.0 148.3 L192.2 159.9 L207.2 153.3 L204.3 140.7 L200.9 137.4 Z" fill="#5faba6"/><path d="M106.0 114.5 L120.3 112.0 L130.4 81.9 L108.3 72.3 L104.1 73.3 L95.5 75.5 Z" fill="#3d9a95"/><path d="M301.9 118.9 L305.1 116.4 L299.9 109.8 L289.7 95.4 L288.0 96.9 L289.0 118.4 Z" fill="#218c87"/><path d="M289.3 156.7 L316.0 175.6 L327.9 172.0 L332.3 149.9 L329.7 146.9 L303.7 145.9 L290.5 154.4 Z" fill="#1c8883"/><path d="M269.8 85.6 L269.3 76.4 L265.1 74.1 L257.9 75.4 L255.5 88.8 Z" fill="#4fa29d"/><path d="M200.9 137.4 L204.3 140.7 L219.4 119.9 L207.3 115.7 L198.3 116.9 Z" fill="#55a19c"/><path d="M226.0 118.0 L232.8 103.2 L225.4 93.5 L222.4 95.1 L220.3 107.6 L224.6 118.1 Z" fill="#489d98"/><path d="M301.9 118.9 L303.7 145.9 L329.7 146.9 L325.0 141.7 L305.1 116.4 Z" fill="#3b9792"/><path d="M248.0 66.3 L261.0 56.1 L249.8 42.2 L236.1 61.2 L238.3 67.8 Z" fill="#4a9d98"/><path d="M160.8 190.3 L165.6 189.5 L182.4 198.6 L194.9 210.0 L199.3 205.5 L199.6 195.3 L185.3 175.9 L170.6 177.9 Z" fill="#5faba6"/><path d="M208.5 88.9 L209.1 92.1 L222.4 95.1 L225.4 93.5 L228.2 88.2 L228.0 86.7 L213.8 83.3 Z" fill="#2b8e89"/><path d="M213.8 83.3 L228.0 86.7 L234.0 71.8 L216.3 71.5 Z" fill="#359893"/><path d="M190.5 85.3 L190.2 74.5 L169.4 69.9 L168.0 87.1 L170.7 89.8 L186.5 90.4 Z" fill="#409c97"/><path d="M214.9 301.4 L233.5 329.1 L238.4 323.8 L241.4 291.5 L245.1 282.2 L229.4 279.1 L226.3 280.1 Z" fill="#4c9d98"/><path d="M120.3 112.0 L126.5 114.6 L147.7 110.6 L146.9 91.0 L136.6 81.3 L130.4 81.9 Z" fill="#3c9994"/><path d="M289.0 118.4 L288.0 96.9 L280.8 98.5 L272.6 106.4 L275.3 112.4 L286.3 119.4 Z" fill="#25908b"/><path d="M267.2 103.9 L271.4 86.8 L269.8 85.6 L255.5 88.8 L253.0 91.0 L256.2 103.7 Z" fill="#50a5a0"/><path d="M365.8 221.7 L356.9 189.5 L343.2 162.1 L332.3 149.9 L327.9 172.0 Z" fill="#1f8b86"/><path d="M232.4 238.9 L249.1 233.4 L237.2 201.2 L205.3 214.2 L215.0 228.6 L210.4 231.6 Z" fill="#4fa29d"/><path d="M254.5 164.4 L244.2 163.5 L240.8 165.0 L245.5 194.1 L260.1 193.2 L271.1 173.7 Z" fill="#4ea19c"/><path d="M189.0 112.9 L191.8 102.7 L186.5 90.4 L170.7 89.8 L170.1 109.9 L183.7 115.6 Z" fill="#57a39e"/><path d="M133.8 138.3 L126.5 114.6 L120.3 112.0 L106.0 114.5 L95.7 127.6 L95.8 128.0 L121.2 150.2 Z" fill="#1d8883"/><path d="M275.3 112.4 L260.6 126.1 L282.5 127.5 L286.3 119.4 Z" fill="#208b86"/><path d="M288.0 96.9 L289.7 95.4 L281.6 84.1 L272.4 87.0 L280.8 98.5 Z" fill="#489d98"/><path d="M176.7 136.1 L154.7 129.0 L149.6 136.3 L157.0 157.5 L158.3 157.9 L177.0 148.3 Z" fill="#5eaaa5"/><path d="M238.8 198.1 L237.2 201.2 L249.1 233.4 L268.7 237.2 L269.2 226.1 L280.5 225.5 L278.9 221.1 L260.1 193.2 L245.5 194.1 Z" fill="#4b9e99"/><path d="M130.4 81.9 L136.6 81.3 L154.1 51.3 L147.3 44.1 L147.3 57.4 L124.6 61.9 L122.3 68.8 L108.3 72.3 Z" fill="#419d98"/><path d="M289.3 156.7 L290.5 154.4 L282.2 137.0 L258.4 135.6 L258.5 138.3 L261.6 144.4 L286.2 159.3 Z" fill="#459893"/><path d="M157.0 157.5 L123.7 175.6 L124.6 182.6 L131.4 203.1 L151.9 191.8 L160.8 190.3 L170.6 177.9 L158.3 157.9 Z" fill="#3c9994"/><path d="M202.9 21.2 L200.3 0.0 L173.0 0.0 L202.3 22.4 Z" fill="#499c97"/><path d="M269.8 85.6 L271.4 86.8 L272.4 87.0 L281.6 84.1 L273.8 73.2 L269.3 76.4 Z" fill="#339691"/><path d="M198.3 116.9 L207.3 115.7 L206.9 97.8 L191.8 102.7 L189.0 112.9 Z" fill="#5faba6"/><path d="M222.4 95.1 L209.1 92.1 L207.3 97.4 L220.3 107.6 Z" fill="#4a9f9a"/><path d="M214.9 301.4 L226.3 280.1 L196.4 264.0 L192.4 274.0 L191.7 308.6 Z" fill="#1a847f"/><path d="M95.8 128.0 L95.7 127.6 L62.7 114.7 L58.5 125.7 L63.1 171.3 L76.1 169.8 Z" fill="#35948f"/><path d="M154.4 116.7 L147.7 110.6 L126.5 114.6 L133.8 138.3 L149.6 136.3 L154.7 129.0 Z" fill="#399691"/><path d="M222.9 119.1 L223.8 149.2 L236.6 139.6 L242.9 124.6 L226.0 118.0 L224.6 118.1 Z" fill="#489d98"/><path d="M221.6 7.4 L215.7 0.0 L200.3 0.0 L202.9 21.2 Z" fill="#51a49f"/><path d="M226.3 280.1 L229.4 279.1 L232.4 238.9 L210.4 231.6 L208.8 232.5 L196.4 264.0 Z" fill="#54a5a0"/><path d="M278.9 221.1 L280.5 225.5 L290.6 225.0 L308.1 212.5 L311.9 217.6 L305.4 190.4 L287.9 181.6 Z" fill="#2f928d"/><path d="M215.2 32.6 L217.3 43.1 L230.0 47.8 L242.2 32.8 L236.3 25.5 Z" fill="#4fa29d"/><path d="M282.2 137.0 L282.5 127.5 L260.6 126.1 L255.3 128.3 L258.4 135.6 Z" fill="#479c97"/><path d="M247.8 88.8 L237.2 69.8 L234.0 71.8 L228.0 86.7 L228.2 88.2 L239.0 93.6 Z" fill="#50a39e"/><path d="M280.0 170.3 L287.9 181.6 L305.4 190.4 L316.0 175.6 L289.3 156.7 L286.2 159.3 Z" fill="#218d88"/><path d="M216.3 71.5 L234.0 71.8 L237.2 69.8 L238.3 67.8 L236.1 61.2 L234.4 59.2 L208.5 57.0 L204.4 60.5 Z" fill="#4da09b"/><path d="M190.2 74.5 L190.5 85.3 L205.0 86.7 L200.7 62.3 Z" fill="#409c97"/></g><circle cx="43.8" cy="43.3" r="26.8" fill="#f5f4f5" fill-opacity="0.95"/><path d="M39.3 31.8 L48.3 31.8 L43.8 25.2 Z M39.3 54.6 L48.3 54.6 L43.8 61.3 Z M32 38.8 L32 47.8 L25.4 43.3 Z M55.6 38.8 L55.6 47.8 L62.2 43.3 Z" fill="#111"/><rect x="105.5" y="28.8" width="57.7" height="29.4" rx="4" fill="#f5f4f5" fill-opacity="0.97"/><rect x="133.3" y="29.5" width="0.8" height="28" fill="#dedede"/><path d="M114.3 43.3 H125.3 M119.8 37.8 V48.8 M143.3 43.3 H154.3" stroke="#111" stroke-width="2.3"/></svg><div style="position:absolute;left:1101.8px;top:932.0px;width:405.3px;height:8.2px;background:linear-gradient(90deg,#94c8c5,#5aaba6 50%,#147e79);"></div><div style="position:absolute;left:1101.8px;top:949.3px;font-size:16px;line-height:17px;color:#1e1e1e;font-weight:normal;white-space:nowrap;">0.0925 [%]</div><div style="position:absolute;right:547.9px;top:949.3px;font-size:16px;line-height:17px;color:#1e1e1e;font-weight:normal;white-space:nowrap;text-align:right;">0.3632 [%]</div><div style="position:absolute;left:1553.8px;top:501.3px;width:460.0px;height:481.0px;background:#fff;border:1px solid #e7e7ea;border-radius:5px;box-sizing:border-box;"></div><div style="position:absolute;left:1554.8px;top:556.5px;width:458.0px;height:1.0px;background:#ebebee;"></div><div style="position:absolute;left:1570.8px;top:521.4px;font-size:16px;line-height:17px;color:#1e1e1e;font-weight:normal;white-space:nowrap;">Prop. unemployed of labor force</div><div style="position:absolute;left:1965.3px;top:513.8px;width:29.5px;height:29.5px;background:#f5f5f5;border:1px solid #e3e3e3;border-radius:3px;box-sizing:border-box;"></div><svg style="position:absolute;left:1973.8px;top:522.2px" width="12.6" height="12.6" viewBox="-6.3 -6.3 12.6 12.6"><path d="M-5.3 -5.3 L5.3 5.3 M5.3 -5.3 L-5.3 5.3" stroke="#111" stroke-width="2.2" stroke-linecap="butt"/></svg><svg style="position:absolute;left:1570.8px;top:574.1px" width="426.5" height="338" viewBox="0 0 426.5 338"><use href="#basemap" x="0" y="0" width="426.5" height="338"/><g opacity="0.84" stroke="#dff4f0" stroke-width="0.8" stroke-opacity="0.7"><path d="M95.7 127.6 L106.0 114.5 L95.5 75.5 L76.7 80.2 L69.9 96.1 L62.7 114.7 Z" fill="#75bab4"/><path d="M202.9 21.2 L202.3 22.4 L202.3 22.9 L215.2 32.6 L236.3 25.5 L221.6 7.4 Z" fill="#7fbeb9"/><path d="M261.6 144.4 L254.5 164.4 L271.1 173.7 L280.0 170.3 L286.2 159.3 Z" fill="#75b8b2"/><path d="M162.3 53.0 L154.1 51.3 L136.6 81.3 L146.9 91.0 L168.0 87.1 L169.4 69.9 Z" fill="#5ea8a2"/><path d="M170.1 109.9 L170.7 89.8 L168.0 87.1 L146.9 91.0 L147.7 110.6 L154.4 116.7 Z" fill="#6eb3ad"/><path d="M258.4 135.6 L255.3 128.3 L248.5 123.6 L242.9 124.6 L236.6 139.6 L246.1 150.0 L258.5 138.3 Z" fill="#7abab4"/><path d="M256.2 103.7 L253.0 91.0 L247.8 88.8 L239.0 93.6 L236.9 100.7 L252.6 109.0 Z" fill="#7cbcb6"/><path d="M157.0 157.5 L149.6 136.3 L133.8 138.3 L121.2 150.2 L122.2 164.4 L122.3 164.4 L123.7 175.6 Z" fill="#6aafa9"/><path d="M230.0 47.8 L234.4 59.2 L236.1 61.2 L249.8 42.2 L242.2 32.8 Z" fill="#75b4af"/><path d="M240.8 165.0 L244.2 163.5 L246.1 150.0 L236.6 139.6 L223.8 149.2 L218.1 157.6 L221.9 162.8 Z" fill="#77bab4"/><path d="M205.0 86.7 L208.5 88.9 L213.8 83.3 L216.3 71.5 L204.4 60.5 L201.5 60.7 L200.7 62.3 Z" fill="#70b2ac"/><path d="M269.3 76.4 L273.8 73.2 L265.8 61.9 L263.7 59.3 L265.1 74.1 Z" fill="#7cbbb6"/><path d="M252.6 109.0 L236.9 100.7 L232.8 103.2 L226.0 118.0 L242.9 124.6 L248.5 123.6 Z" fill="#75b5af"/><path d="M190.5 85.3 L186.5 90.4 L191.8 102.7 L206.9 97.8 L207.3 97.4 L209.1 92.1 L208.5 88.9 L205.0 86.7 Z" fill="#78bab4"/><path d="M222.9 119.1 L224.6 118.1 L220.3 107.6 L207.3 97.4 L206.9 97.8 L207.3 115.7 L219.4 119.9 Z" fill="#77bab4"/><path d="M271.1 173.7 L260.1 193.2 L278.9 221.1 L287.9 181.6 L280.0 170.3 Z" fill="#73b6b0"/><path d="M121.2 150.2 L95.8 128.0 L76.1 169.8 L122.2 164.4 Z" fill="#6db2ac"/><path d="M258.5 138.3 L246.1 150.0 L244.2 163.5 L254.5 164.4 L261.6 144.4 Z" fill="#6fb2ac"/><path d="M265.1 74.1 L263.7 59.3 L261.0 56.1 L248.0 66.3 L257.9 75.4 Z" fill="#7bbab5"/><path d="M154.1 51.3 L162.3 53.0 L182.7 43.5 L184.9 37.8 L159.8 0.0 L130.3 0.0 L147.3 18.7 L147.3 44.1 Z" fill="#73b8b2"/><path d="M214.9 301.4 L191.7 308.6 L191.3 325.4 L197.4 330.7 L225.0 338.0 L233.5 329.1 Z" fill="#74b5af"/><path d="M305.4 190.4 L311.9 217.6 L318.2 226.1 L345.7 218.6 L368.5 231.2 L365.8 221.7 L327.9 172.0 L316.0 175.6 Z" fill="#6bb1ab"/><path d="M219.1 177.6 L199.6 195.3 L199.3 205.5 L202.5 202.2 L205.0 213.6 L205.3 214.2 L237.2 201.2 L238.8 198.1 Z" fill="#72b5af"/><path d="M204.3 140.7 L207.2 153.3 L218.1 157.6 L223.8 149.2 L222.9 119.1 L219.4 119.9 Z" fill="#6eb1ab"/><path d="M204.4 60.5 L208.5 57.0 L217.3 43.1 L215.2 32.6 L202.3 22.9 L184.9 37.8 L182.7 43.5 L201.5 60.7 Z" fill="#75b4af"/><path d="M181.4 131.4 L200.9 137.4 L198.3 116.9 L189.0 112.9 L183.7 115.6 Z" fill="#7cbab5"/><path d="M217.3 43.1 L208.5 57.0 L234.4 59.2 L230.0 47.8 Z" fill="#74b3ae"/><path d="M218.1 157.6 L207.2 153.3 L192.2 159.9 L185.3 175.9 L199.6 195.3 L219.1 177.6 L221.9 162.8 Z" fill="#7dbbb6"/><path d="M201.5 60.7 L182.7 43.5 L162.3 53.0 L169.4 69.9 L190.2 74.5 L200.7 62.3 Z" fill="#7abcb6"/><path d="M257.9 75.4 L248.0 66.3 L238.3 67.8 L237.2 69.8 L247.8 88.8 L253.0 91.0 L255.5 88.8 Z" fill="#7ebdb8"/><path d="M275.3 112.4 L272.6 106.4 L267.2 103.9 L256.2 103.7 L252.6 109.0 L248.5 123.6 L255.3 128.3 L260.6 126.1 Z" fill="#74b4ae"/><path d="M240.8 165.0 L221.9 162.8 L219.1 177.6 L238.8 198.1 L245.5 194.1 Z" fill="#70b3ad"/><path d="M202.3 22.4 L173.0 0.0 L159.8 0.0 L184.9 37.8 L202.3 22.9 Z" fill="#7fbeb9"/><path d="M245.1 282.2 L251.4 266.5 L267.8 255.1 L268.7 237.2 L249.1 233.4 L232.4 238.9 L229.4 279.1 Z" fill="#73b4ae"/><path d="M236.9 100.7 L239.0 93.6 L228.2 88.2 L225.4 93.5 L232.8 103.2 Z" fill="#7ebeb8"/><path d="M303.7 145.9 L301.9 118.9 L289.0 118.4 L286.3 119.4 L282.5 127.5 L282.2 137.0 L290.5 154.4 Z" fill="#76b4af"/><path d="M158.3 157.9 L170.6 177.9 L185.3 175.9 L192.2 159.9 L177.0 148.3 Z" fill="#80beb9"/><path d="M280.8 98.5 L272.4 87.0 L271.4 86.8 L267.2 103.9 L272.6 106.4 Z" fill="#71b1ab"/><path d="M170.1 109.9 L154.4 116.7 L154.7 129.0 L176.7 136.1 L181.4 131.4 L183.7 115.6 Z" fill="#7ebcb7"/><path d="M181.4 131.4 L176.7 136.1 L177.0 148.3 L192.2 159.9 L207.2 153.3 L204.3 140.7 L200.9 137.4 Z" fill="#80beb9"/><path d="M106.0 114.5 L120.3 112.0 L130.4 81.9 L108.3 72.3 L104.1 73.3 L95.5 75.5 Z" fill="#71b6b0"/><path d="M301.9 118.9 L305.1 116.4 L299.9 109.8 L289.7 95.4 L288.0 96.9 L289.0 118.4 Z" fill="#79b9b3"/><path d="M289.3 156.7 L316.0 175.6 L327.9 172.0 L332.3 149.9 L329.7 146.9 L303.7 145.9 L290.5 154.4 Z" fill="#71b7b1"/><path d="M269.8 85.6 L269.3 76.4 L265.1 74.1 L257.9 75.4 L255.5 88.8 Z" fill="#80bfba"/><path d="M200.9 137.4 L204.3 140.7 L219.4 119.9 L207.3 115.7 L198.3 116.9 Z" fill="#77b5b0"/><path d="M226.0 118.0 L232.8 103.2 L225.4 93.5 L222.4 95.1 L220.3 107.6 L224.6 118.1 Z" fill="#78b8b2"/><path d="M301.9 118.9 L303.7 145.9 L329.7 146.9 L325.0 141.7 L305.1 116.4 Z" fill="#74b2ad"/><path d="M248.0 66.3 L261.0 56.1 L249.8 42.2 L236.1 61.2 L238.3 67.8 Z" fill="#78b7b2"/><path d="M160.8 190.3 L165.6 189.5 L182.4 198.6 L194.9 210.0 L199.3 205.5 L199.6 195.3 L185.3 175.9 L170.6 177.9 Z" fill="#77b5b0"/><path d="M208.5 88.9 L209.1 92.1 L222.4 95.1 L225.4 93.5 L228.2 88.2 L228.0 86.7 L213.8 83.3 Z" fill="#6db0aa"/><path d="M213.8 83.3 L228.0 86.7 L234.0 71.8 L216.3 71.5 Z" fill="#73b6b0"/><path d="M190.5 85.3 L190.2 74.5 L169.4 69.9 L168.0 87.1 L170.7 89.8 L186.5 90.4 Z" fill="#70b2ac"/><path d="M214.9 301.4 L233.5 329.1 L238.4 323.8 L241.4 291.5 L245.1 282.2 L229.4 279.1 L226.3 280.1 Z" fill="#71b2ac"/><path d="M120.3 112.0 L126.5 114.6 L147.7 110.6 L146.9 91.0 L136.6 81.3 L130.4 81.9 Z" fill="#6aafa9"/><path d="M289.0 118.4 L288.0 96.9 L280.8 98.5 L272.6 106.4 L275.3 112.4 L286.3 119.4 Z" fill="#7cbcb6"/><path d="M267.2 103.9 L271.4 86.8 L269.8 85.6 L255.5 88.8 L253.0 91.0 L256.2 103.7 Z" fill="#74b4ae"/><path d="M365.8 221.7 L356.9 189.5 L343.2 162.1 L332.3 149.9 L327.9 172.0 Z" fill="#66aca6"/><path d="M232.4 238.9 L249.1 233.4 L237.2 201.2 L205.3 214.2 L215.0 228.6 L210.4 231.6 Z" fill="#73b6b0"/><path d="M254.5 164.4 L244.2 163.5 L240.8 165.0 L245.5 194.1 L260.1 193.2 L271.1 173.7 Z" fill="#75b8b2"/><path d="M189.0 112.9 L191.8 102.7 L186.5 90.4 L170.7 89.8 L170.1 109.9 L183.7 115.6 Z" fill="#7dbbb6"/><path d="M133.8 138.3 L126.5 114.6 L120.3 112.0 L106.0 114.5 L95.7 127.6 L95.8 128.0 L121.2 150.2 Z" fill="#71b6b0"/><path d="M275.3 112.4 L260.6 126.1 L282.5 127.5 L286.3 119.4 Z" fill="#78b8b2"/><path d="M288.0 96.9 L289.7 95.4 L281.6 84.1 L272.4 87.0 L280.8 98.5 Z" fill="#7bbbb5"/><path d="M176.7 136.1 L154.7 129.0 L149.6 136.3 L157.0 157.5 L158.3 157.9 L177.0 148.3 Z" fill="#79b7b2"/><path d="M238.8 198.1 L237.2 201.2 L249.1 233.4 L268.7 237.2 L269.2 226.1 L280.5 225.5 L278.9 221.1 L260.1 193.2 L245.5 194.1 Z" fill="#76b9b3"/><path d="M130.4 81.9 L136.6 81.3 L154.1 51.3 L147.3 44.1 L147.3 57.4 L124.6 61.9 L122.3 68.8 L108.3 72.3 Z" fill="#64aea8"/><path d="M289.3 156.7 L290.5 154.4 L282.2 137.0 L258.4 135.6 L258.5 138.3 L261.6 144.4 L286.2 159.3 Z" fill="#77bab4"/><path d="M157.0 157.5 L123.7 175.6 L124.6 182.6 L131.4 203.1 L151.9 191.8 L160.8 190.3 L170.6 177.9 L158.3 157.9 Z" fill="#76bbb5"/><path d="M202.9 21.2 L200.3 0.0 L173.0 0.0 L202.3 22.4 Z" fill="#7ebdb8"/><path d="M269.8 85.6 L271.4 86.8 L272.4 87.0 L281.6 84.1 L273.8 73.2 L269.3 76.4 Z" fill="#72b5af"/><path d="M198.3 116.9 L207.3 115.7 L206.9 97.8 L191.8 102.7 L189.0 112.9 Z" fill="#7cbab5"/><path d="M222.4 95.1 L209.1 92.1 L207.3 97.4 L220.3 107.6 Z" fill="#7bbbb5"/><path d="M214.9 301.4 L226.3 280.1 L196.4 264.0 L192.4 274.0 L191.7 308.6 Z" fill="#77b8b2"/><path d="M95.8 128.0 L95.7 127.6 L62.7 114.7 L58.5 125.7 L63.1 171.3 L76.1 169.8 Z" fill="#68ada7"/><path d="M154.4 116.7 L147.7 110.6 L126.5 114.6 L133.8 138.3 L149.6 136.3 L154.7 129.0 Z" fill="#76bbb5"/><path d="M222.9 119.1 L223.8 149.2 L236.6 139.6 L242.9 124.6 L226.0 118.0 L224.6 118.1 Z" fill="#73b3ad"/><path d="M221.6 7.4 L215.7 0.0 L200.3 0.0 L202.9 21.2 Z" fill="#79b8b3"/><path d="M226.3 280.1 L229.4 279.1 L232.4 238.9 L210.4 231.6 L208.8 232.5 L196.4 264.0 Z" fill="#75b6b0"/><path d="M278.9 221.1 L280.5 225.5 L290.6 225.0 L308.1 212.5 L311.9 217.6 L305.4 190.4 L287.9 181.6 Z" fill="#6cafa9"/><path d="M215.2 32.6 L217.3 43.1 L230.0 47.8 L242.2 32.8 L236.3 25.5 Z" fill="#7bbab5"/><path d="M282.2 137.0 L282.5 127.5 L260.6 126.1 L255.3 128.3 L258.4 135.6 Z" fill="#79b9b3"/><path d="M247.8 88.8 L237.2 69.8 L234.0 71.8 L228.0 86.7 L228.2 88.2 L239.0 93.6 Z" fill="#7ebdb8"/><path d="M280.0 170.3 L287.9 181.6 L305.4 190.4 L316.0 175.6 L289.3 156.7 L286.2 159.3 Z" fill="#6db3ad"/><path d="M216.3 71.5 L234.0 71.8 L237.2 69.8 L238.3 67.8 L236.1 61.2 L234.4 59.2 L208.5 57.0 L204.4 60.5 Z" fill="#77b6b1"/><path d="M190.2 74.5 L190.5 85.3 L205.0 86.7 L200.7 62.3 Z" fill="#76b8b2"/></g><polygon points="182.6,7.3 197.4,8.4 215.7,21.0 233.9,34.6 247.6,49.4 238.4,52.8 222.5,51.7 211.1,34.6 192.9,21.0" fill="#1a7f7a" opacity="0.92" stroke="#dff4f0" stroke-width="0.8" stroke-opacity="0.7"/><circle cx="43.8" cy="43.3" r="26.8" fill="#f5f4f5" fill-opacity="0.95"/><path d="M39.3 31.8 L48.3 31.8 L43.8 25.2 Z M39.3 54.6 L48.3 54.6 L43.8 61.3 Z M32 38.8 L32 47.8 L25.4 43.3 Z M55.6 38.8 L55.6 47.8 L62.2 43.3 Z" fill="#111"/><rect x="105.5" y="28.8" width="57.7" height="29.4" rx="4" fill="#f5f4f5" fill-opacity="0.97"/><rect x="133.3" y="29.5" width="0.8" height="28" fill="#dedede"/><path d="M114.3 43.3 H125.3 M119.8 37.8 V48.8 M143.3 43.3 H154.3" stroke="#111" stroke-width="2.3"/></svg><div style="position:absolute;left:1581.4px;top:932.0px;width:405.3px;height:8.2px;background:linear-gradient(90deg,#94c8c5,#5aaba6 50%,#147e79);"></div><div style="position:absolute;left:1581.4px;top:949.3px;font-size:16px;line-height:17px;color:#1e1e1e;font-weight:normal;white-space:nowrap;">2.7000 [%]</div><div style="position:absolute;right:68.3px;top:949.3px;font-size:16px;line-height:17px;color:#1e1e1e;font-weight:normal;white-space:nowrap;text-align:right;">63.0000 [%]</div><div style="position:absolute;left:0.3px;top:979.3px;font-size:34px;line-height:38px;color:#000;font-weight:bold;white-space:nowrap;">a</div><div style="position:absolute;left:79.3px;top:1098.6px;width:1975.7px;height:939.0px;background:#ecedf6;"></div><div style="position:absolute;left:2.8px;top:1142.6px;width:76.7px;height:895.0px;background:#fff;border-left:1px solid #d4d4d8;border-right:1px solid #e2e2ea;box-sizing:border-box;"></div><svg style="position:absolute;left:1.3px;top:1034.6px;overflow:visible" width="60" height="800" viewBox="0 0 60 800" fill="none" stroke="#222" stroke-width="1.7" stroke-linejoin="round"><rect x="29.6" y="167.4" width="7.7" height="8" rx="2" fill="#262626" stroke="none"/><rect x="40.3" y="167.4" width="7.7" height="8" rx="2" fill="#262626" stroke="none"/><rect x="29.6" y="178.3" width="7.7" height="8" rx="2" fill="#262626" stroke="none"/><rect x="40.3" y="178.3" width="7.7" height="8" rx="2" fill="#262626" stroke="none"/></svg><svg style="position:absolute;left:1.3px;top:1034.6px;overflow:visible" width="60" height="800" viewBox="0 0 60 800" fill="none" stroke="#262626" stroke-width="1.75" stroke-linejoin="round"><path d="M28.3 247 V268.2 H49.5"/><path d="M31.5 262.3 L37.6 255.2 L41.4 258.8 L47.7 251.3" stroke-linecap="round"/></svg><svg style="position:absolute;left:1.3px;top:1034.6px;overflow:visible" width="60" height="800" viewBox="0 0 60 800" fill="none" stroke="#9c1a2c" stroke-width="1.75" stroke-linejoin="round"><path d="M34 331 H31.6 Q29.6 331 29.6 333 V346.8 Q29.6 348.8 31.6 348.8 H45.9 Q47.9 348.8 47.9 346.8 V333 Q47.9 331 45.9 331 H43.2"/><rect x="35" y="327.9" width="7.2" height="4.5" rx="1.8"/><path d="M34.5 343.9 V346 M38.6 339.2 V346 M42.8 336.8 V346" stroke-width="2.3" stroke-linecap="round"/></svg><svg style="position:absolute;left:1.3px;top:1034.6px;overflow:visible" width="60" height="800" viewBox="0 0 60 800" fill="none" stroke="#1e1e1e" stroke-width="1.7" stroke-linejoin="round"><path d="M28.3 410.2 L34.8 408.9 L42.2 410.5 L49 408.9 V428.6 L42.2 429.9 L34.8 428.2 L28.3 429.6 Z"/><path d="M34.9 409.2 V428.2 M42.2 410.5 V429.9"/></svg><svg style="position:absolute;left:1.3px;top:1034.6px;overflow:visible" width="60" height="800" viewBox="0 0 60 800" fill="none" stroke="#1e1e1e" stroke-width="1.55" stroke-linejoin="round"><path d="M28.6 510 V501 Q28.6 499.6 30 499.6 H33.6 V495.6 Q33.6 494.2 35 494.2 H35.4 V491.6 Q35.4 490.3 36.7 490.3 H40.6 Q41.9 490.3 41.9 491.6 V494.2 H42.3 Q43.7 494.2 43.7 495.6 V499.6 H47.6 Q49 499.6 49 501 V510 Z"/><path d="M33.6 499.6 V510 M43.7 499.6 V510 M36.9 510 V506.6 Q36.9 505 38.65 505 Q40.4 505 40.4 506.6 V510"/><path d="M35.4 494.2 H41.9" stroke-width="1.2"/><circle cx="38.65" cy="499.3" r="1.55" fill="#1e1e1e" stroke="none"/><path d="M31.1 502.6 V503.4 M31.1 505 V505.8 M31.1 507.4 V508 M46.3 502.6 V503.4 M46.3 505 V505.8 M46.3 507.4 V508" stroke-width="1.1"/></svg><div style="position:absolute;left:3.8px;top:1586.6px;width:75.7px;height:1.0px;background:#ececf0;"></div><div style="position:absolute;left:30.7px;top:1633.1px;font-size:16.5px;line-height:19px;color:#1e1e1e">@</div><svg style="position:absolute;left:1.3px;top:1034.6px;overflow:visible" width="60" height="800" viewBox="0 0 60 800" fill="none" stroke="#1e1e1e" stroke-width="1.6" stroke-linejoin="round"><path d="M38.9 680.3 Q43.6 680.4 47.8 682.2 Q48.4 693.6 38.9 700.2 Q29.4 693.6 30 682.2 Q34.2 680.4 38.9 680.3 Z"/><path d="M38.9 686.6 V692.4 M36 689.5 H41.8" stroke-width="1.6"/></svg><svg style="position:absolute;left:1.3px;top:1034.6px;overflow:visible" width="60" height="800" viewBox="0 0 60 800" fill="none" stroke="#1e1e1e" stroke-width="1.6" stroke-linejoin="round"><path d="M31 761.3 H46.4 Q47.9 761.3 47.9 762.8 V779.5 Q47.9 781 46.4 781 H31.3 Q29.9 781 29.9 779.5"/><path d="M29.9 761.3 V762.6"/><circle cx="29.6" cy="766.8" r="1" fill="#1e1e1e" stroke="none"/><circle cx="29.6" cy="771.3" r="1" fill="#1e1e1e" stroke="none"/><circle cx="29.6" cy="775.9" r="1" fill="#1e1e1e" stroke="none"/><path d="M34.9 766.6 H42.9 M34.9 768.9 H42.9 M34.9 771.2 H42.9 M34.9 773.5 H38.2" stroke-width="1.1"/></svg><div style="position:absolute;left:105.3px;top:1036.6px;width:1949.7px;height:64.0px;background:#2c3d56;border-top:1.5px solid #1b2636;box-sizing:border-box;"></div><div style="position:absolute;left:105.3px;top:1099.4px;width:1949.7px;height:1.5px;background:#1d2534;"></div><div style="position:absolute;left:105.3px;top:1100.9px;width:1949.7px;height:4.7px;background:linear-gradient(#d9dae4,rgba(236,237,246,0));"></div><div style="position:absolute;left:154.8px;top:1057.6px;font-size:19.35px;line-height:22px;color:#fff;font-weight:normal;white-space:nowrap;text-shadow:0 0 2px #0c1522,0 0 1px #0c1522;letter-spacing:0px;-webkit-text-stroke:0.45px #fff;">Statistical analysis</div><div style="position:absolute;left:1748.7px;top:1047.6px;width:29.7px;height:29.7px;background:#c8102e;box-shadow:0 0 0 1px #5a2a3a;"><div style="position:absolute;left:0;top:7px;width:100%;text-align:center;color:#fff;font-size:11px;line-height:14px;letter-spacing:-0.3px">JG<span style="display:inline-block;width:1px;height:12px;background:#fff;vertical-align:-1px;margin:0 1.5px"></span>U</div></div><div style="position:absolute;left:1795.6px;top:1050.9px;font-size:20.5px;line-height:23px;color:#f2f4f8;white-space:nowrap;transform-origin:0 0;transform:scaleX(0.8125)">UNIVERSITÄTS</div><div style="position:absolute;left:1917px;top:1046.4px;font-size:27px;line-height:31px;font-weight:bold;color:#e6ecf3;white-space:nowrap;transform-origin:0 0;transform:scaleX(1.08);-webkit-text-stroke:0.5px #e6ecf3">medizin.</div><div style="position:absolute;left:2001.5px;top:1078.9px;width:31.8px;height:1.3px;background:#dfe3ea;"></div><div style="position:absolute;left:2001px;top:1078.9px;font-size:12.8px;line-height:15px;color:#e4e8ee;white-space:nowrap;transform-origin:0 0;transform:scaleX(0.80)">MAINZ</div><div style="position:absolute;left:100.3px;top:1112.6px;width:1930.7px;height:394.0px;background:#ededf6;border:1px solid #d9d9e2;box-sizing:border-box;"></div><div style="position:absolute;left:101.3px;top:1113.6px;width:1928.7px;height:39.0px;background:#f5f5f4;border-bottom:1px solid #dedee2;box-sizing:border-box;"></div><div style="position:absolute;left:112.8px;top:1124.7px;font-size:16px;line-height:17px;color:#111;font-weight:bold;white-space:nowrap;">Variables to be selected for statistical analysis:</div><svg style="position:absolute;left:2003.5px;top:1130.9px" width="14" height="10" viewBox="0 0 14 10"><path d="M1.6 7.8 L7 2.6 L12.4 7.8" fill="none" stroke="#111" stroke-width="2"/></svg><div style="position:absolute;left:3.3px;top:1036.6px;width:102.0px;height:107.8px;box-sizing:border-box;border:1.6px solid #202020;background:#f1f2f4;overflow:hidden;"><svg width="100%" height="100%" style="position:absolute;left:0;top:0"><defs><filter id="nz1036" x="0" y="0" width="100%" height="100%"><feTurbulence type="fractalNoise" baseFrequency="0.09" numOctaves="3" seed="4"/><feColorMatrix values="0 0 0 0 0.55  0 0 0 0 0.56  0 0 0 0 0.58  0 0 0 1.6 -0.75"/></filter></defs><rect width="100%" height="100%" filter="url(#nz1036)" opacity="0.35"/></svg></div><div style="position:absolute;left:11.9px;top:1083.2px;font-size:19.3px;line-height:21px;color:#333;font-weight:bold;white-space:nowrap;letter-spacing:0px;"><span style="color:#ad0f26">RED</span><span style="color:#44689a">Path</span></div><div style="position:absolute;left:112.8px;top:1172.8px;font-size:16px;line-height:17px;color:#4b4b4b;font-weight:normal;white-space:nowrap;">Select a geographic region:</div><div style="position:absolute;left:113.0px;top:1199.5px;width:427.8px;height:27.7px;background:#fff;box-shadow:0 0 0 0.6px #e6e6ec;"></div><div style="position:absolute;left:513.8px;top:1199.5px;width:27.0px;height:27.7px;background:#f3f3f7;"></div><div style="position:absolute;left:513.3px;top:1199.5px;width:1.0px;height:27.7px;background:#e8e8ee;"></div><div style="position:absolute;left:121.8px;top:1204.5px;font-size:14px;line-height:16px;color:#141414;font-weight:normal;white-space:nowrap;-webkit-text-stroke:0.25px #141414;">Mainz districts</div><svg style="position:absolute;left:494.6px;top:1207.6px" width="12" height="12" viewBox="-6.0 -6.0 12 12"><path d="M-5.0 -5.0 L5.0 5.0 M5.0 -5.0 L-5.0 5.0" stroke="#555" stroke-width="1.5" stroke-linecap="butt"/></svg><svg style="position:absolute;left:523.0px;top:1210.6px" width="9" height="6.5" viewBox="0 0 9 6.5"><path d="M0 0 H9 L4.5 6.5 Z" fill="#1e1e1e"/></svg><div style="position:absolute;left:112.8px;top:1259.0px;font-size:16px;line-height:17px;color:#4b4b4b;font-weight:normal;white-space:nowrap;">Select a tumor (dependent variable):</div><div style="position:absolute;left:113.0px;top:1285.7px;width:427.8px;height:28.6px;background:#fff;box-shadow:0 0 0 0.6px #e6e6ec;"></div><div style="position:absolute;left:513.8px;top:1285.7px;width:27.0px;height:28.6px;background:#f3f3f7;"></div><div style="position:absolute;left:513.3px;top:1285.7px;width:1.0px;height:28.6px;background:#e8e8ee;"></div><div style="position:absolute;left:121.8px;top:1291.2px;font-size:14px;line-height:16px;color:#141414;font-weight:normal;white-space:nowrap;-webkit-text-stroke:0.25px #141414;">Stomach (C16)</div><svg style="position:absolute;left:494.6px;top:1294.3px" width="12" height="12" viewBox="-6.0 -6.0 12 12"><path d="M-5.0 -5.0 L5.0 5.0 M5.0 -5.0 L-5.0 5.0" stroke="#555" stroke-width="1.5" stroke-linecap="butt"/></svg><svg style="position:absolute;left:523.0px;top:1297.2px" width="9" height="6.5" viewBox="0 0 9 6.5"><path d="M0 0 H9 L4.5 6.5 Z" fill="#1e1e1e"/></svg><div style="position:absolute;left:112.8px;top:1346.0px;font-size:16px;line-height:17px;color:#4b4b4b;font-weight:normal;white-space:nowrap;">Select one/more determinant/s (independent variable/s):</div><div style="position:absolute;left:113.0px;top:1372.8px;width:427.8px;height:28.2px;background:#fff;box-shadow:0 0 0 0.6px #e6e6ec;"></div><div style="position:absolute;left:513.8px;top:1372.8px;width:27.0px;height:28.2px;background:#f3f3f7;"></div><div style="position:absolute;left:513.3px;top:1372.8px;width:1.0px;height:28.2px;background:#e8e8ee;"></div><div style="position:absolute;left:121.8px;top:1378.1px;font-size:14px;line-height:16px;color:#141414;font-weight:normal;white-space:nowrap;-webkit-text-stroke:0.25px #141414;">Prop. foreigners of total population</div><svg style="position:absolute;left:494.6px;top:1381.2px" width="12" height="12" viewBox="-6.0 -6.0 12 12"><path d="M-5.0 -5.0 L5.0 5.0 M5.0 -5.0 L-5.0 5.0" stroke="#555" stroke-width="1.5" stroke-linecap="butt"/></svg><svg style="position:absolute;left:523.0px;top:1384.2px" width="9" height="6.5" viewBox="0 0 9 6.5"><path d="M0 0 H9 L4.5 6.5 Z" fill="#1e1e1e"/></svg><div style="position:absolute;left:113.0px;top:1408.2px;width:263.9px;height:30.5px;background:#f4f4f6;border:1px solid #e2e2e8;border-radius:3px;box-sizing:border-box;"></div><div style="position:absolute;left:121.2px;top:1416.0px;font-size:16px;line-height:17px;color:#1e1e1e;font-weight:normal;white-space:nowrap;">Add selected independent variable</div><div style="position:absolute;left:113.0px;top:1461.9px;width:206.5px;height:31.6px;background:#f4f4f6;border:1px solid #e2e2e8;border-radius:3px;box-sizing:border-box;"></div><svg style="position:absolute;left:123.5px;top:1471.3px" width="14" height="14.5" viewBox="0 0 14 14.5" fill="none" stroke="#161616" stroke-width="1.35"><rect x="0.9" y="0.9" width="12.3" height="12.5" rx="1.3"/><path d="M0.9 5.2 H13.2 M8.2 5.2 V13.4 M0.9 9.3 H8.2 M4.5 5.2 V13.4" stroke-width="1.25"/></svg><div style="position:absolute;left:142.3px;top:1470.3px;font-size:16px;line-height:17px;color:#1e1e1e;font-weight:normal;white-space:nowrap;">Start statistical analysis</div><div style="position:absolute;left:601.0px;top:1346.0px;font-size:16px;line-height:17px;color:#4b4b4b;font-weight:normal;white-space:nowrap;">Selected variables:</div><div style="position:absolute;left:601.0px;top:1371.2px;width:267.2px;height:31.9px;background:#efeeef;border:1.6px solid #9e2436;border-radius:4px;box-sizing:border-box;"></div><svg style="position:absolute;left:609.8px;top:1381.7px" width="11.5" height="11.5" viewBox="-5.75 -5.75 11.5 11.5"><path d="M-4.75 -4.75 L4.75 4.75 M4.75 -4.75 L-4.75 4.75" stroke="#c10f24" stroke-width="2.1" stroke-linecap="butt"/></svg><div style="position:absolute;left:629.3px;top:1378.8px;font-size:16px;line-height:17px;color:#b0142b;font-weight:normal;white-space:nowrap;">Prop. unemployed of labor force</div><div style="position:absolute;left:874.2px;top:1371.2px;width:129.8px;height:31.9px;background:#efeeef;border:1.6px solid #9e2436;border-radius:4px;box-sizing:border-box;"></div><svg style="position:absolute;left:883.0px;top:1381.7px" width="11.5" height="11.5" viewBox="-5.75 -5.75 11.5 11.5"><path d="M-4.75 -4.75 L4.75 4.75 M4.75 -4.75 L-4.75 4.75" stroke="#c10f24" stroke-width="2.1" stroke-linecap="butt"/></svg><div style="position:absolute;left:902.5px;top:1378.8px;font-size:16px;line-height:17px;color:#b0142b;font-weight:normal;white-space:nowrap;">Offered rents</div><div style="position:absolute;left:1010.0px;top:1371.2px;width:333.2px;height:31.9px;background:#efeeef;border:1.6px solid #9e2436;border-radius:4px;box-sizing:border-box;"></div><svg style="position:absolute;left:1018.8px;top:1381.7px" width="11.5" height="11.5" viewBox="-5.75 -5.75 11.5 11.5"><path d="M-4.75 -4.75 L4.75 4.75 M4.75 -4.75 L-4.75 4.75" stroke="#c10f24" stroke-width="2.1" stroke-linecap="butt"/></svg><div style="position:absolute;left:1038.3px;top:1378.8px;font-size:16px;line-height:17px;color:#b0142b;font-weight:normal;white-space:nowrap;">Prop. commercial area of settlement area</div><div style="position:absolute;left:1349.2px;top:1371.2px;width:257.8px;height:31.9px;background:#efeeef;border:1.6px solid #9e2436;border-radius:4px;box-sizing:border-box;"></div><svg style="position:absolute;left:1358.0px;top:1381.7px" width="11.5" height="11.5" viewBox="-5.75 -5.75 11.5 11.5"><path d="M-4.75 -4.75 L4.75 4.75 M4.75 -4.75 L-4.75 4.75" stroke="#c10f24" stroke-width="2.1" stroke-linecap="butt"/></svg><div style="position:absolute;left:1377.5px;top:1378.8px;font-size:16px;line-height:17px;color:#b0142b;font-weight:normal;white-space:nowrap;">Prop. privately insured patients</div><div style="position:absolute;left:100.5px;top:1518.8px;width:1929.5px;height:255.6px;background:#fff;"></div><div style="position:absolute;left:100.5px;top:1518.8px;width:1913.5px;height:38.6px;background:#f9f9f9;border-bottom:1px solid #e3e3e3;box-sizing:border-box;"></div><div style="position:absolute;left:100.5px;top:1557.4px;width:1913.5px;height:54.8px;background:#fff;"></div><div style="position:absolute;left:100.5px;top:1612.2px;width:1913.5px;height:54.2px;background:#f4f4f4;"></div><div style="position:absolute;left:100.5px;top:1666.4px;width:1913.5px;height:54.0px;background:#fff;"></div><div style="position:absolute;left:100.5px;top:1720.4px;width:1913.5px;height:54.0px;background:#f4f4f4;"></div><div style="position:absolute;left:266.7px;top:1518.8px;width:1.0px;height:255.6px;background:#e6e6e6;"></div><div style="position:absolute;left:932.8px;top:1518.8px;width:1.0px;height:255.6px;background:#e6e6e6;"></div><div style="position:absolute;left:1098.9px;top:1518.8px;width:1.0px;height:255.6px;background:#e6e6e6;"></div><div style="position:absolute;left:1265.3px;top:1518.8px;width:1.0px;height:255.6px;background:#e6e6e6;"></div><div style="position:absolute;left:1431.7px;top:1518.8px;width:1.0px;height:255.6px;background:#e6e6e6;"></div><div style="position:absolute;left:1598.1px;top:1518.8px;width:1.0px;height:255.6px;background:#e6e6e6;"></div><div style="position:absolute;left:1847.5px;top:1518.8px;width:1.0px;height:255.6px;background:#e6e6e6;"></div><div style="position:absolute;left:2013.5px;top:1518.8px;width:1.0px;height:255.6px;background:#e6e6e6;"></div><div style="position:absolute;left:113.5px;top:1529.0px;font-size:16px;line-height:17px;color:#2e2e2e;font-weight:normal;white-space:nowrap;">Stat. Model</div><svg style="position:absolute;left:239.3px;top:1530.5px" width="14" height="14" viewBox="0 0 14 14"><path d="M0.3 0.6 H13.7 L8.3 6.6 V13.6 L5.7 11.6 V6.6 Z" fill="#222"/></svg><div style="position:absolute;left:280.2px;top:1529.0px;font-size:16px;line-height:17px;color:#2e2e2e;font-weight:normal;white-space:nowrap;">Selected Variable</div><svg style="position:absolute;left:905.8px;top:1530.5px" width="14" height="14" viewBox="0 0 14 14"><path d="M0.3 0.6 H13.7 L8.3 6.6 V13.6 L5.7 11.6 V6.6 Z" fill="#222"/></svg><div style="position:absolute;left:946.3px;top:1529.0px;font-size:16px;line-height:17px;color:#2e2e2e;font-weight:normal;white-space:nowrap;">Stat. Model</div><svg style="position:absolute;left:1070.5px;top:1530.5px" width="14" height="14" viewBox="0 0 14 14"><path d="M0.3 0.6 H13.7 L8.3 6.6 V13.6 L5.7 11.6 V6.6 Z" fill="#222"/></svg><div style="position:absolute;left:1112.4px;top:1529.0px;font-size:16px;line-height:17px;color:#2e2e2e;font-weight:normal;white-space:nowrap;">Rate Ratio (RR)</div><svg style="position:absolute;left:1236.8px;top:1530.5px" width="14" height="14" viewBox="0 0 14 14"><path d="M0.3 0.6 H13.7 L8.3 6.6 V13.6 L5.7 11.6 V6.6 Z" fill="#222"/></svg><div style="position:absolute;left:1278.8px;top:1529.0px;font-size:16px;line-height:17px;color:#2e2e2e;font-weight:normal;white-space:nowrap;">CI 2.5%</div><svg style="position:absolute;left:1403.2px;top:1530.5px" width="14" height="14" viewBox="0 0 14 14"><path d="M0.3 0.6 H13.7 L8.3 6.6 V13.6 L5.7 11.6 V6.6 Z" fill="#222"/></svg><div style="position:absolute;left:1445.2px;top:1529.0px;font-size:16px;line-height:17px;color:#2e2e2e;font-weight:normal;white-space:nowrap;">CI 97.5%</div><svg style="position:absolute;left:1569.6px;top:1530.5px" width="14" height="14" viewBox="0 0 14 14"><path d="M0.3 0.6 H13.7 L8.3 6.6 V13.6 L5.7 11.6 V6.6 Z" fill="#222"/></svg><div style="position:absolute;left:1611.6px;top:1529.0px;font-size:16px;line-height:17px;color:#2e2e2e;font-weight:normal;white-space:nowrap;">Rate Ratio &amp; CI</div><div style="position:absolute;left:1861.0px;top:1529.0px;font-size:16px;line-height:17px;color:#2e2e2e;font-weight:normal;white-space:nowrap;">Significant?</div><svg style="position:absolute;left:1985.5px;top:1530.5px" width="14" height="14" viewBox="0 0 14 14"><path d="M0.3 0.6 H13.7 L8.3 6.6 V13.6 L5.7 11.6 V6.6 Z" fill="#222"/></svg><div style="position:absolute;left:113.0px;top:1571.9px;width:51.8px;height:25.5px;background:#6582b2;border-radius:3.5px;"><div style="position:absolute;left:0;top:5.2px;width:100%;text-align:center;color:#fff;font-weight:bold;font-size:12.5px;line-height:15px;letter-spacing:-0.45px">Leroux</div></div><div style="position:absolute;left:280.6px;top:1576.4px;font-size:16px;line-height:17px;color:#333;font-weight:normal;white-space:nowrap;">Prop. unemployed of labor force [%]</div><div style="position:absolute;left:946.3px;top:1571.9px;width:70.6px;height:25.5px;background:#293a55;border-radius:3.5px;"><div style="position:absolute;left:0;top:5.2px;width:100%;text-align:center;color:#fff;font-weight:bold;font-size:12.5px;line-height:15px;letter-spacing:-0.45px">Multivariat</div></div><div style="position:absolute;right:802.2px;top:1576.4px;font-size:16px;line-height:17px;color:#333;font-weight:normal;white-space:nowrap;text-align:right;">-0,2914</div><div style="position:absolute;right:636.0px;top:1576.4px;font-size:16px;line-height:17px;color:#333;font-weight:normal;white-space:nowrap;text-align:right;">-1,9</div><div style="position:absolute;right:469.5px;top:1576.4px;font-size:16px;line-height:17px;color:#333;font-weight:normal;white-space:nowrap;text-align:right;">1,1496</div><svg style="position:absolute;left:1638px;top:1572.1px" width="170" height="20" viewBox="0 0 170 20"><path d="M4.2 2.5 V17.5 M165.7 2.5 V17.5 M4.2 10 H165.7" stroke="#333" stroke-width="1.6"/><circle cx="89.4" cy="10" r="4.6" fill="#222"/></svg><div style="position:absolute;left:1861.3px;top:1571.9px;width:26.5px;height:25.5px;background:#d9151f;border-radius:3.5px;"><div style="position:absolute;left:0;top:5px;width:100%;text-align:center;color:#fff;font-weight:bold;font-size:13px;line-height:15px">no</div></div><div style="position:absolute;left:113.0px;top:1626.4px;width:51.8px;height:25.5px;background:#6582b2;border-radius:3.5px;"><div style="position:absolute;left:0;top:5.2px;width:100%;text-align:center;color:#fff;font-weight:bold;font-size:12.5px;line-height:15px;letter-spacing:-0.45px">Leroux</div></div><div style="position:absolute;left:280.6px;top:1630.9px;font-size:16px;line-height:17px;color:#333;font-weight:normal;white-space:nowrap;">Offered rents [EUR]</div><div style="position:absolute;left:946.3px;top:1626.4px;width:70.6px;height:25.5px;background:#293a55;border-radius:3.5px;"><div style="position:absolute;left:0;top:5.2px;width:100%;text-align:center;color:#fff;font-weight:bold;font-size:12.5px;line-height:15px;letter-spacing:-0.45px">Multivariat</div></div><div style="position:absolute;right:802.2px;top:1630.9px;font-size:16px;line-height:17px;color:#333;font-weight:normal;white-space:nowrap;text-align:right;">0,0052</div><div style="position:absolute;right:636.0px;top:1630.9px;font-size:16px;line-height:17px;color:#333;font-weight:normal;white-space:nowrap;text-align:right;">-0,1997</div><div style="position:absolute;right:469.5px;top:1630.9px;font-size:16px;line-height:17px;color:#333;font-weight:normal;white-space:nowrap;text-align:right;">0,2236</div><svg style="position:absolute;left:1638px;top:1626.6px" width="170" height="20" viewBox="0 0 170 20"><path d="M4.2 2.5 V17.5 M165.7 2.5 V17.5 M4.2 10 H165.7" stroke="#333" stroke-width="1.6"/><circle cx="82.4" cy="10" r="4.6" fill="#222"/></svg><div style="position:absolute;left:1861.3px;top:1626.4px;width:26.5px;height:25.5px;background:#d9151f;border-radius:3.5px;"><div style="position:absolute;left:0;top:5px;width:100%;text-align:center;color:#fff;font-weight:bold;font-size:13px;line-height:15px">no</div></div><div style="position:absolute;left:113.0px;top:1680.5px;width:51.8px;height:25.5px;background:#6582b2;border-radius:3.5px;"><div style="position:absolute;left:0;top:5.2px;width:100%;text-align:center;color:#fff;font-weight:bold;font-size:12.5px;line-height:15px;letter-spacing:-0.45px">Leroux</div></div><div style="position:absolute;left:280.6px;top:1685.0px;font-size:16px;line-height:17px;color:#333;font-weight:normal;white-space:nowrap;">Prop. commercial area of settlement area [%]</div><div style="position:absolute;left:946.3px;top:1680.5px;width:70.6px;height:25.5px;background:#293a55;border-radius:3.5px;"><div style="position:absolute;left:0;top:5.2px;width:100%;text-align:center;color:#fff;font-weight:bold;font-size:12.5px;line-height:15px;letter-spacing:-0.45px">Multivariat</div></div><div style="position:absolute;right:802.2px;top:1685.0px;font-size:16px;line-height:17px;color:#333;font-weight:normal;white-space:nowrap;text-align:right;">-0,3327</div><div style="position:absolute;right:636.0px;top:1685.0px;font-size:16px;line-height:17px;color:#333;font-weight:normal;white-space:nowrap;text-align:right;">-1,737</div><div style="position:absolute;right:469.5px;top:1685.0px;font-size:16px;line-height:17px;color:#333;font-weight:normal;white-space:nowrap;text-align:right;">0,9886</div><svg style="position:absolute;left:1638px;top:1680.7px" width="170" height="20" viewBox="0 0 170 20"><path d="M4.2 2.5 V17.5 M165.7 2.5 V17.5 M4.2 10 H165.7" stroke="#333" stroke-width="1.6"/><circle cx="87.2" cy="10" r="4.6" fill="#222"/></svg><div style="position:absolute;left:1861.3px;top:1680.5px;width:26.5px;height:25.5px;background:#d9151f;border-radius:3.5px;"><div style="position:absolute;left:0;top:5px;width:100%;text-align:center;color:#fff;font-weight:bold;font-size:13px;line-height:15px">no</div></div><div style="position:absolute;left:113.0px;top:1734.5px;width:51.8px;height:25.5px;background:#6582b2;border-radius:3.5px;"><div style="position:absolute;left:0;top:5.2px;width:100%;text-align:center;color:#fff;font-weight:bold;font-size:12.5px;line-height:15px;letter-spacing:-0.45px">Leroux</div></div><div style="position:absolute;left:280.6px;top:1739.0px;font-size:16px;line-height:17px;color:#333;font-weight:normal;white-space:nowrap;">Prop. privately insured patients [%]</div><div style="position:absolute;left:946.3px;top:1734.5px;width:70.6px;height:25.5px;background:#293a55;border-radius:3.5px;"><div style="position:absolute;left:0;top:5.2px;width:100%;text-align:center;color:#fff;font-weight:bold;font-size:12.5px;line-height:15px;letter-spacing:-0.45px">Multivariat</div></div><div style="position:absolute;right:802.2px;top:1739.0px;font-size:16px;line-height:17px;color:#333;font-weight:normal;white-space:nowrap;text-align:right;">0,1077</div><div style="position:absolute;right:636.0px;top:1739.0px;font-size:16px;line-height:17px;color:#333;font-weight:normal;white-space:nowrap;text-align:right;">-1,9006</div><div style="position:absolute;right:469.5px;top:1739.0px;font-size:16px;line-height:17px;color:#333;font-weight:normal;white-space:nowrap;text-align:right;">2,0277</div><svg style="position:absolute;left:1638px;top:1734.7px" width="170" height="20" viewBox="0 0 170 20"><path d="M4.2 2.5 V17.5 M165.7 2.5 V17.5 M4.2 10 H165.7" stroke="#333" stroke-width="1.6"/><circle cx="86.5" cy="10" r="4.6" fill="#222"/></svg><div style="position:absolute;left:1861.3px;top:1734.5px;width:26.5px;height:25.5px;background:#d9151f;border-radius:3.5px;"><div style="position:absolute;left:0;top:5px;width:100%;text-align:center;color:#fff;font-weight:bold;font-size:13px;line-height:15px">no</div></div><svg style="position:absolute;left:2016px;top:1567px" width="12" height="8" viewBox="0 0 12 8"><path d="M1.5 6.5 L6 2 L10.5 6.5 Z" fill="#777"/></svg><svg style="position:absolute;left:2016px;top:1756px" width="12" height="8" viewBox="0 0 12 8"><path d="M1.5 1.5 L6 6 L10.5 1.5 Z" fill="#777"/></svg><div style="position:absolute;left:-1.0px;top:2045.8px;font-size:35.5px;line-height:40px;color:#000;font-weight:bold;white-space:nowrap;">b</div></body></html>
